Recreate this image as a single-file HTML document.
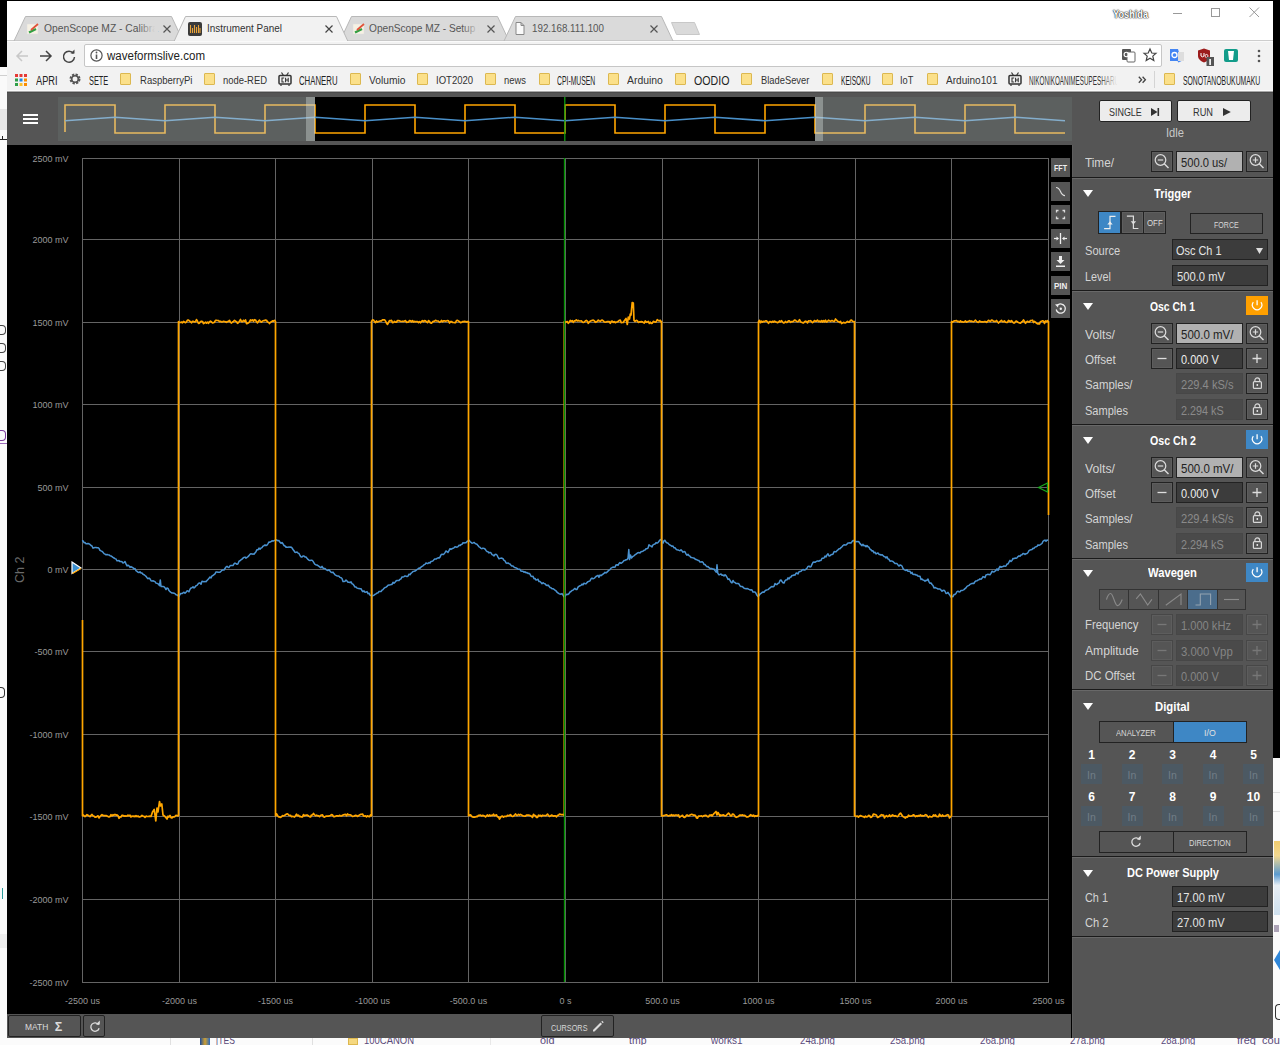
<!DOCTYPE html>
<html><head><meta charset="utf-8"><title>Instrument Panel</title>
<style>
*{box-sizing:border-box;margin:0;padding:0}
html,body{width:1280px;height:1045px;overflow:hidden;background:#000;font-family:"Liberation Sans",sans-serif;position:relative}
.a{position:absolute}
.t{position:absolute;white-space:nowrap;line-height:normal}
.fold{position:absolute;top:73px;width:11px;height:12px;background:#fbe08a;border:1px solid #dcb850;border-radius:1px}
.sb{position:absolute;left:1051px;width:19px;height:19px;background:#555;}
.tri{position:absolute;left:1083px;width:0;height:0;border-left:5px solid transparent;border-right:5px solid transparent;border-top:7px solid #fff}
.sep{position:absolute;left:1072px;width:201px;height:2px;border-top:1px solid #1a1a1a;background:#686868}
.btn{position:absolute;width:22px;height:21px;background:#555;border:1px solid #222;box-shadow:inset 0 0 0 1px #5d5d5d}
.inp{position:absolute;left:1176px;width:67px;height:21px;border:1px solid #222}
.lt{background:#b1b1b1}
.dk{background:#3c3c3c}
.dis{background:#4a4a4a;border-color:#474747}
.inpw{position:absolute;left:1172px;width:96px;height:21px;border:1px solid #222;background:#3c3c3c}
.pwr{position:absolute;left:1246px;width:22px;height:19px}
.inb{position:absolute;width:21px;height:20px;background:#4c5963}
svg{position:absolute;overflow:visible}
</style></head><body>
<div class="a" style="left:0;top:67px;width:7px;height:978px;background:#fafafa"></div>
<div class="a" style="left:0;top:75px;width:7px;height:1px;background:#d0d0d0"></div>
<div class="a" style="left:0;top:109px;width:7px;height:21px;background:#e6e6e6"></div>
<div class="a" style="left:0;top:139px;width:7px;height:1px;background:#222"></div>
<div class="a" style="left:2px;top:136px;width:1px;height:3px;background:#222"></div>
<div class="a" style="left:0;top:325px;width:6px;height:10px;border:1.2px solid #444;border-left:none;border-radius:0 4px 4px 0"></div>
<div class="a" style="left:0;top:343px;width:6px;height:10px;border:1.2px solid #444;border-left:none;border-radius:0 4px 4px 0"></div>
<div class="a" style="left:0;top:361px;width:6px;height:10px;border:1.2px solid #444;border-left:none;border-radius:0 4px 4px 0"></div>
<div class="a" style="left:0;top:430px;width:6px;height:11px;border:1.3px solid #7a3a9a;border-left:none;border-radius:0 4px 4px 0"></div>
<div class="a" style="left:0;top:443px;width:7px;height:1px;background:#9a6ab8"></div>
<div class="a" style="left:0;top:687px;width:5px;height:11px;border:1.3px solid #333;border-left:none;border-radius:0 4px 4px 0"></div>
<div class="a" style="left:2px;top:888px;width:1.3px;height:11px;background:#2a9a9a"></div>
<div class="a" style="left:0;top:934px;width:7px;height:14px;background:#eee"></div>
<div class="a" style="left:1273px;top:758px;width:7px;height:287px;background:#fafafa"></div>
<div class="a" style="left:1273px;top:792px;width:7px;height:1px;background:#ddd"></div>
<div class="a" style="left:1273px;top:811px;width:7px;height:1px;background:#ddd"></div>
<div class="a" style="left:1274px;top:841px;width:6px;height:74px;background:linear-gradient(#f0cc70 0,#f2d890 20%,#5a9ad0 45%,#e8eef4 60%,#cfe0ee 100%)"></div>
<div class="a" style="left:1274px;top:925px;width:5px;height:7px;background:#7a6a8a;opacity:.6"></div>
<div class="a" style="left:1274px;top:950px;width:6px;height:20px;background:#2f86d8;clip-path:polygon(100% 0,0 50%,100% 100%)"></div>
<div class="a" style="left:1275px;top:1004px;width:5px;height:16px;border:1.5px solid #333;border-right:none;border-radius:4px 0 0 4px"></div>
<div class="a" style="left:0;top:1038px;width:1280px;height:7px;background:#fbfbfb;overflow:hidden">
<div class="a" style="left:170px;top:0;width:1px;height:7px;background:#e0e0e0"></div><div class="a" style="left:312px;top:0;width:1px;height:7px;background:#e0e0e0"></div><div class="a" style="left:490px;top:0;width:1px;height:7px;background:#e8e8e8"></div>
<div class="a" style="left:200px;top:-2px;width:10px;height:9px;background:linear-gradient(90deg,#1a4a9a,#d0a030,#2a6ac0)"></div>
<div class="a" style="left:348px;top:0;width:10px;height:7px;background:#f5d880;border:1px solid #ddb850"></div>
<div class="t" style="left:216.00px;top:-4.13px;font-size:11px;color:#5a4a7a;transform:scaleX(0.7771);transform-origin:0 0;">[TES</div>
<div class="t" style="left:364.00px;top:-4.13px;font-size:11px;color:#5a4a7a;transform:scaleX(0.8609);transform-origin:0 0;">100CANON</div>
<div class="t" style="left:540.00px;top:-4.13px;font-size:11px;color:#5a4a7a;transform:scaleX(0.9878);transform-origin:0 0;">old</div>
<div class="t" style="left:629.00px;top:-4.13px;font-size:11px;color:#5a4a7a;transform:scaleX(0.9544);transform-origin:0 0;">tmp</div>
<div class="t" style="left:711.00px;top:-4.13px;font-size:11px;color:#5a4a7a;transform:scaleX(0.9041);transform-origin:0 0;">works1</div>
<div class="t" style="left:800.00px;top:-4.13px;font-size:11px;color:#5a4a7a;transform:scaleX(0.8802);transform-origin:0 0;">24a.png</div>
<div class="t" style="left:890.00px;top:-4.13px;font-size:11px;color:#5a4a7a;transform:scaleX(0.8802);transform-origin:0 0;">25a.png</div>
<div class="t" style="left:980.00px;top:-4.13px;font-size:11px;color:#5a4a7a;transform:scaleX(0.8802);transform-origin:0 0;">26a.png</div>
<div class="t" style="left:1070.00px;top:-4.13px;font-size:11px;color:#5a4a7a;transform:scaleX(0.8802);transform-origin:0 0;">27a.png</div>
<div class="t" style="left:1160.60px;top:-4.13px;font-size:11px;color:#5a4a7a;transform:scaleX(0.8651);transform-origin:0 0;">28a.png</div>
<div class="t" style="left:1237.00px;top:-4.13px;font-size:11px;color:#5a4a7a;">freq_count</div>
</div>
<div class="a" style="left:7px;top:1px;width:1266px;height:39px;background:#fff"></div>
<svg width="1280" height="45" style="left:0;top:0">
  <g stroke="#b8b8b8" stroke-width="1">
    <path d="M7 40.5 H1273" stroke="#cdcdcd"/>
    <path d="M14 41 L25.5 16.5 H171.5 L183 41 Z" fill="#dadada"/>
    <path d="M340 41 L351.5 16.5 H497.5 L509 41 Z" fill="#dadada"/>
    <path d="M504 41 L515.5 16.5 H661.5 L673 41 Z" fill="#dadada"/>
    <path d="M671.5 22.5 H694.5 L699.5 34.5 H676.5 Z" fill="#dadada" stroke="#c8c8c8"/>
    <path d="M174 41.5 L185.5 16.5 H336.5 L348 41.5" fill="#f2f2f2"/>
  </g>
</svg>
<svg width="14" height="14" style="left:26px;top:22px"><rect x="1" y="2" width="11" height="10" fill="#f6f1e4" stroke="#ddd" stroke-width=".5"/><path d="M3 10.5 L10 7" stroke="#2fa043" stroke-width="2.3"/><path d="M5 8 L12 2" stroke="#e0523a" stroke-width="1.8"/></svg>
<div class="t" style="left:44.00px;top:22.41px;font-size:11.5px;color:#555;transform:scaleX(0.8963);transform-origin:0 0;">OpenScope MZ - Calibra</div>
<div class="a" style="left:138px;top:20px;width:20px;height:15px;background:linear-gradient(90deg,rgba(218,218,218,0),#dadada 85%)"></div>
<svg width="8" height="8" style="left:163px;top:25px"><path d="M.5 .5 L7.5 7.5 M7.5 .5 L.5 7.5" stroke="#555" stroke-width="1.2"/></svg>
<svg width="14" height="14" style="left:188px;top:22px"><rect x="0" y="0" width="14" height="14" rx="2" fill="#3a3a3a"/><path d="M2.5 3 V11 M4.5 6 V11 M6.5 3 V11 M8.5 5 V11 M10.5 3 V11 M12 6 V11" stroke="#e8a23a" stroke-width="1.1"/></svg>
<div class="t" style="left:206.50px;top:22.41px;font-size:11.5px;color:#333;transform:scaleX(0.8627);transform-origin:0 0;">Instrument Panel</div>
<svg width="8" height="8" style="left:325px;top:25px"><path d="M.5 .5 L7.5 7.5 M7.5 .5 L.5 7.5" stroke="#444" stroke-width="1.2"/></svg>
<svg width="14" height="14" style="left:352px;top:22px"><rect x="1" y="2" width="11" height="10" fill="#f6f1e4" stroke="#ddd" stroke-width=".5"/><path d="M3 10.5 L10 7" stroke="#2fa043" stroke-width="2.3"/><path d="M5 8 L12 2" stroke="#e0523a" stroke-width="1.8"/></svg>
<div class="t" style="left:369.00px;top:22.41px;font-size:11.5px;color:#555;transform:scaleX(0.8805);transform-origin:0 0;">OpenScope MZ - Setup [</div>
<div class="a" style="left:462px;top:20px;width:20px;height:15px;background:linear-gradient(90deg,rgba(218,218,218,0),#dadada 85%)"></div>
<svg width="8" height="8" style="left:487px;top:25px"><path d="M.5 .5 L7.5 7.5 M7.5 .5 L.5 7.5" stroke="#555" stroke-width="1.2"/></svg>
<svg width="10" height="13" style="left:515px;top:22px"><path d="M1 .5 H6 L9 3.5 V12.5 H1 Z M6 .5 V3.5 H9" fill="#fafafa" stroke="#888" stroke-width="1"/></svg>
<div class="t" style="left:532.00px;top:22.41px;font-size:11.5px;color:#555;transform:scaleX(0.8508);transform-origin:0 0;">192.168.111.100</div>
<svg width="8" height="8" style="left:650px;top:25px"><path d="M.5 .5 L7.5 7.5 M7.5 .5 L.5 7.5" stroke="#555" stroke-width="1.2"/></svg>
<div class="t" style="left:1113.00px;top:8.37px;font-size:11px;color:#fff;font-weight:bold;transform:scaleX(0.8339);transform-origin:0 0;text-shadow:0 0 1px #222,0 0 1px #222,0 0 2px #444;">Yoshida</div>
<div class="a" style="left:1173px;top:13px;width:9px;height:1px;background:#999"></div>
<div class="a" style="left:1211px;top:8px;width:9px;height:9px;border:1px solid #999"></div>
<svg width="11" height="11" style="left:1249px;top:7px"><path d="M.5 .5 L10 10 M10 .5 L.5 10" stroke="#999" stroke-width="1"/></svg>
<div class="a" style="left:7px;top:41px;width:1266px;height:50px;background:#f2f2f2;border-top:1px solid #fafafa"></div>
<svg width="14" height="14" style="left:15px;top:49px"><path d="M13 7 H2 M7 2 L2 7 L7 12" fill="none" stroke="#c8c8c8" stroke-width="1.5"/></svg>
<svg width="14" height="14" style="left:39px;top:49px"><path d="M1 7 H12 M7 2 L12 7 L7 12" fill="none" stroke="#444" stroke-width="1.5"/></svg>
<svg width="14" height="14" style="left:62px;top:49px"><path d="M11.5 4.5 A5.5 5.5 0 1 0 12.5 8" fill="none" stroke="#444" stroke-width="1.5"/><path d="M8.5 4.5 H12.5 V0.5 Z" fill="#444"/></svg>
<div class="a" style="left:84px;top:44px;width:1078px;height:23px;background:#fff;border:1px solid #c6c6c6;border-radius:2px"></div>
<svg width="14" height="14" style="left:90px;top:49px"><circle cx="6.5" cy="6.5" r="5.6" fill="none" stroke="#555" stroke-width="1.2"/><path d="M6.5 5.5 V10" stroke="#555" stroke-width="1.6"/><circle cx="6.5" cy="3.5" r=".9" fill="#555"/></svg>
<div class="t" style="left:107.00px;top:49.49px;font-size:12.5px;color:#222;transform:scaleX(0.9221);transform-origin:0 0;">waveformslive.com</div>
<svg width="14" height="14" style="left:1122px;top:49px"><rect x="0" y="0" width="9" height="11" rx="1" fill="#555"/><rect x="5" y="3" width="8" height="10" rx="1" fill="#fff" stroke="#666"/><circle cx="4.3" cy="5.5" r="2.2" fill="none" stroke="#fff" stroke-width="1.1"/></svg>
<svg width="14" height="14" style="left:1143px;top:48px"><path d="M7 1 L8.8 5 L13 5.3 L9.8 8.1 L10.8 12.5 L7 10.2 L3.2 12.5 L4.2 8.1 L1 5.3 L5.2 5 Z" fill="none" stroke="#444" stroke-width="1.2"/></svg>
<svg width="16" height="16" style="left:1170px;top:49px"><path d="M0 0 H8 L11.5 12 L8.5 13.5 L7.5 12 H0 Z" fill="#4385f3"/><rect x="8" y="3" width="6" height="9" fill="#ddd"/><circle cx="4.5" cy="6" r="2.5" fill="none" stroke="#fff" stroke-width="1.3"/></svg>
<svg width="16" height="18" style="left:1198px;top:49px"><path d="M0 1.5 L6 -.5 L12 1.5 V7 C12 10 9 12.5 6 13.5 C3 12.5 0 10 0 7 Z" fill="#9c1c1c"/><path d="M3 4 V7 A2 2 0 0 0 6 7 V4 M7 7 A1.5 1.5 0 1 0 7 6.9" fill="none" stroke="#fff" stroke-width="1"/><rect x="8.5" y="8" width="7.5" height="9" fill="#555"/><rect x="11.3" y="10" width="1.6" height="6" fill="#fff"/></svg>
<svg width="14" height="14" style="left:1224px;top:49px"><rect x="0" y="0" width="14" height="13" rx="2" fill="#129c8a"/><path d="M4 2 H10 L9 11 H5 Z" fill="#fff"/></svg>
<svg width="4" height="14" style="left:1257px;top:49px"><circle cx="2" cy="2" r="1.3" fill="#555"/><circle cx="2" cy="7" r="1.3" fill="#555"/><circle cx="2" cy="12" r="1.3" fill="#555"/></svg>
<svg width="12" height="12" style="left:15px;top:74px"><g><rect x="0" y="0" width="3" height="3" fill="#e53935"/><rect x="4.5" y="0" width="3" height="3" fill="#e53935"/><rect x="9" y="0" width="3" height="3" fill="#e53935"/><rect x="0" y="4.5" width="3" height="3" fill="#2e9e48"/><rect x="4.5" y="4.5" width="3" height="3" fill="#1e88e5"/><rect x="9" y="4.5" width="3" height="3" fill="#fb8c00"/><rect x="0" y="9" width="3" height="3" fill="#2e9e48"/><rect x="4.5" y="9" width="3" height="3" fill="#fbc02d"/><rect x="9" y="9" width="3" height="3" fill="#fb8c00"/></g></svg>
<div class="t" style="left:35.60px;top:73.65px;font-size:12px;color:#222;transform:scaleX(0.7712);transform-origin:0 0;">APRI</div>
<svg width="12" height="12" style="left:69px;top:73px"><circle cx="6" cy="6" r="4.2" fill="none" stroke="#555" stroke-width="2.6" stroke-dasharray="2.1 1.2"/><circle cx="6" cy="6" r="3.3" fill="none" stroke="#555" stroke-width="1.6"/></svg>
<div class="t" style="left:89.00px;top:73.65px;font-size:12px;color:#222;transform:scaleX(0.6158);transform-origin:0 0;">SETE</div>
<div class="fold" style="left:120px"></div>
<div class="t" style="left:139.50px;top:74.07px;font-size:11px;color:#333;transform:scaleX(0.8658);transform-origin:0 0;">RaspberryPi</div>
<div class="fold" style="left:204px"></div>
<div class="t" style="left:223.20px;top:74.07px;font-size:11px;color:#333;transform:scaleX(0.8567);transform-origin:0 0;">node-RED</div>
<div class="fold" style="left:350px"></div>
<div class="t" style="left:368.50px;top:74.07px;font-size:11px;color:#333;transform:scaleX(0.9327);transform-origin:0 0;">Volumio</div>
<div class="fold" style="left:417px"></div>
<div class="t" style="left:435.50px;top:74.07px;font-size:11px;color:#333;transform:scaleX(0.8668);transform-origin:0 0;">IOT2020</div>
<div class="fold" style="left:485px"></div>
<div class="t" style="left:504.30px;top:74.07px;font-size:11px;color:#333;transform:scaleX(0.8528);transform-origin:0 0;">news</div>
<div class="fold" style="left:539px"></div>
<div class="t" style="left:557.00px;top:73.65px;font-size:12px;color:#222;transform:scaleX(0.5688);transform-origin:0 0;">CPI-MUSEN</div>
<div class="fold" style="left:608px"></div>
<div class="t" style="left:626.80px;top:74.07px;font-size:11px;color:#333;transform:scaleX(0.9469);transform-origin:0 0;">Arduino</div>
<div class="fold" style="left:675px"></div>
<div class="t" style="left:693.60px;top:73.65px;font-size:12px;color:#222;transform:scaleX(0.8850);transform-origin:0 0;">OODIO</div>
<div class="fold" style="left:741px"></div>
<div class="t" style="left:760.60px;top:74.07px;font-size:11px;color:#333;transform:scaleX(0.8493);transform-origin:0 0;">BladeSever</div>
<div class="fold" style="left:822px"></div>
<div class="t" style="left:840.60px;top:73.65px;font-size:12px;color:#222;transform:scaleX(0.5511);transform-origin:0 0;">KEISOKU</div>
<div class="fold" style="left:882px"></div>
<div class="t" style="left:900.40px;top:74.07px;font-size:11px;color:#333;transform:scaleX(0.8431);transform-origin:0 0;">IoT</div>
<div class="fold" style="left:927px"></div>
<div class="t" style="left:945.50px;top:74.07px;font-size:11px;color:#333;transform:scaleX(0.9153);transform-origin:0 0;">Arduino101</div>
<svg width="14" height="14" style="left:278px;top:72px"><rect x="1" y="3.5" width="12" height="8.5" rx="1" fill="none" stroke="#333" stroke-width="1.5"/><path d="M3.5 0.5 L5.5 3.5 M10.5 0.5 L8.5 3.5 M3 12.5 V14 M11 12.5 V14" stroke="#333" stroke-width="1.2"/><path d="M6.2 6 H4 V10 H6.2 M7.6 5.8 V10.2 M10.2 5.8 V10.2 M7.6 8 H10.2" fill="none" stroke="#333" stroke-width="1.1"/></svg>
<div class="t" style="left:298.50px;top:73.65px;font-size:12px;color:#222;transform:scaleX(0.6488);transform-origin:0 0;">CHANERU</div>
<svg width="14" height="14" style="left:1008px;top:72px"><rect x="1" y="3.5" width="12" height="8.5" rx="1" fill="none" stroke="#333" stroke-width="1.5"/><path d="M3.5 0.5 L5.5 3.5 M10.5 0.5 L8.5 3.5 M3 12.5 V14 M11 12.5 V14" stroke="#333" stroke-width="1.2"/><path d="M6.2 6 H4 V10 H6.2 M7.6 5.8 V10.2 M10.2 5.8 V10.2 M7.6 8 H10.2" fill="none" stroke="#333" stroke-width="1.1"/></svg>
<div class="t" style="left:1028.60px;top:73.65px;font-size:12px;color:#333;transform:scaleX(0.5252);transform-origin:0 0;">NIKONIKOANIMESUPESHARU</div>
<div class="a" style="left:1100px;top:72px;width:22px;height:15px;background:linear-gradient(90deg,rgba(242,242,242,0),#f2f2f2 80%)"></div>
<svg width="9" height="8" style="left:1137.5px;top:75.5px"><path d="M.8 .8 L3.6 3.8 L.8 6.8 M4.6 .8 L7.4 3.8 L4.6 6.8" fill="none" stroke="#444" stroke-width="1.3"/></svg>
<div class="a" style="left:1154px;top:71px;width:1px;height:17px;background:#d4d4d4"></div>
<div class="fold" style="left:1164px"></div>
<div class="t" style="left:1183.30px;top:73.65px;font-size:12px;color:#222;transform:scaleX(0.5693);transform-origin:0 0;">SONOTANOBUKUMAKU</div>
<div class="a" style="left:7px;top:90px;width:1266px;height:1px;background:#fafafa"></div>
<div class="a" style="left:7px;top:91px;width:1266px;height:1px;background:#a8a8a8"></div>
<div class="a" style="left:7px;top:92px;width:1266px;height:1px;background:#4a4a4a"></div>
<div class="a" style="left:7px;top:93px;width:1266px;height:945px;background:#555"></div>
<div class="a" style="left:23px;top:114px;width:15px;height:2px;background:#fff"></div>
<div class="a" style="left:23px;top:118px;width:15px;height:2px;background:#fff"></div>
<div class="a" style="left:23px;top:122px;width:15px;height:2px;background:#fff"></div>
<div class="a" style="left:58px;top:97px;width:1014px;height:44px;background:#000"></div>
<svg width="1280" height="160" style="left:0;top:0">
  <path d="M65 132 L65 105 L115 105 L115 133 L165 133 L165 105 L215 105 L215 133 L265 133 L265 105 L315 105 L315 133 L365 133 L365 105 L415 105 L415 133 L465 133 L465 105 L515 105 L515 133 L565 133 L565 105 L615 105 L615 133 L665 133 L665 105 L715 105 L715 133 L765 133 L765 105 L815 105 L815 133 L865 133 L865 105 L915 105 L915 133 L965 133 L965 105 L1015 105 L1015 133 L1065 133" fill="none" stroke="#ffa500" stroke-width="1.6"/>
  <path d="M65 120.7 L115 117.2 L165 120.7 L215 117.2 L265 120.7 L315 117.2 L365 120.7 L415 117.2 L465 120.7 L515 117.2 L565 120.7 L615 117.2 L665 120.7 L715 117.2 L765 120.7 L815 117.2 L865 120.7 L915 117.2 L965 120.7 L1015 117.2 L1065 120.7" fill="none" stroke="#4a90c9" stroke-width="1.6"/>
  <line x1="564.8" y1="97" x2="564.8" y2="141" stroke="#109a10" stroke-width="1.3"/>
  <rect x="58" y="97" width="248" height="44" fill="rgba(200,209,206,0.46)"/>
  <rect x="823" y="97" width="249" height="44" fill="rgba(200,209,206,0.46)"/>
  <rect x="306" y="97" width="9" height="44" fill="rgba(205,214,211,0.68)"/>
  <rect x="815" y="97" width="8" height="44" fill="rgba(205,214,211,0.68)"/>
</svg>
<div class="a" style="left:7px;top:145px;width:1065px;height:869px;background:#000"></div>
<svg width="1280" height="1045" style="left:0;top:0">
  <g stroke="#646464" stroke-width="1"><line x1="82.5" y1="158" x2="82.5" y2="983" /><line x1="179.5" y1="158" x2="179.5" y2="983" /><line x1="275.5" y1="158" x2="275.5" y2="983" /><line x1="372.5" y1="158" x2="372.5" y2="983" /><line x1="468.5" y1="158" x2="468.5" y2="983" /><line x1="565.5" y1="158" x2="565.5" y2="983" /><line x1="662.5" y1="158" x2="662.5" y2="983" /><line x1="758.5" y1="158" x2="758.5" y2="983" /><line x1="855.5" y1="158" x2="855.5" y2="983" /><line x1="951.5" y1="158" x2="951.5" y2="983" /><line x1="1048.5" y1="158" x2="1048.5" y2="983" /><line x1="82" y1="158.5" x2="1049" y2="158.5" /><line x1="82" y1="239.5" x2="1049" y2="239.5" /><line x1="82" y1="322.5" x2="1049" y2="322.5" /><line x1="82" y1="404.5" x2="1049" y2="404.5" /><line x1="82" y1="487.5" x2="1049" y2="487.5" /><line x1="82" y1="569.5" x2="1049" y2="569.5" /><line x1="82" y1="651.5" x2="1049" y2="651.5" /><line x1="82" y1="734.5" x2="1049" y2="734.5" /><line x1="82" y1="816.5" x2="1049" y2="816.5" /><line x1="82" y1="899.5" x2="1049" y2="899.5" /><line x1="82" y1="982.5" x2="1049" y2="982.5" /></g>
  <path d="M82.0 541.0 L83.0 540.7 L84.0 542.8 L85.0 542.6 L86.0 543.7 L87.0 543.8 L88.0 543.5 L89.0 543.8 L90.0 544.4 L91.0 545.5 L92.0 546.0 L93.0 548.2 L94.0 547.7 L95.0 547.5 L96.0 547.5 L97.0 547.8 L98.0 547.7 L99.0 548.3 L100.0 550.3 L101.0 550.9 L102.0 551.4 L103.0 552.3 L104.0 553.6 L105.0 554.1 L106.0 554.8 L107.0 554.5 L108.0 554.8 L109.0 554.9 L110.0 555.7 L111.0 555.9 L112.0 556.6 L113.0 557.4 L114.0 558.0 L115.0 558.6 L116.0 559.0 L117.0 560.8 L118.0 560.8 L119.0 560.6 L120.0 561.6 L121.0 561.5 L122.0 561.7 L123.0 563.0 L124.0 562.6 L125.0 561.5 L126.0 563.9 L127.0 566.0 L128.0 565.2 L129.0 565.8 L130.0 567.4 L131.0 566.6 L132.0 567.3 L133.0 567.7 L134.0 568.9 L135.0 568.5 L136.0 570.7 L137.0 571.4 L138.0 572.3 L139.0 572.6 L140.0 571.7 L141.0 573.0 L142.0 573.0 L143.0 574.3 L144.0 574.7 L145.0 575.5 L146.0 576.3 L147.0 577.7 L148.0 578.7 L149.0 578.1 L150.0 578.9 L151.0 580.7 L152.0 581.1 L153.0 580.7 L154.0 581.3 L155.0 581.6 L156.0 583.1 L157.0 583.4 L158.0 583.7 L159.5 585.6 L160.3 579.9 L161.0 586.4 L163.0 586.6 L164.0 586.8 L165.0 587.8 L166.0 589.5 L167.0 588.0 L168.0 588.4 L169.0 590.6 L170.0 591.7 L171.0 592.4 L172.0 593.0 L173.0 593.0 L174.0 593.2 L175.0 593.7 L176.0 594.8 L177.0 594.9 L178.0 595.6 L179.0 596.5 L180.0 594.4 L181.0 593.4 L182.0 593.6 L183.0 592.8 L184.0 592.2 L185.0 593.3 L186.0 592.3 L187.0 590.8 L188.0 591.0 L189.0 591.8 L190.0 589.3 L191.0 588.0 L192.0 587.7 L193.0 586.7 L194.0 588.0 L195.0 587.1 L196.0 585.7 L197.0 585.4 L198.0 584.0 L199.0 583.1 L200.0 583.0 L201.0 584.3 L202.0 581.2 L203.0 581.4 L204.0 581.9 L205.0 581.4 L206.0 581.7 L207.0 580.5 L208.0 579.4 L209.0 578.3 L210.0 577.0 L211.0 577.9 L212.0 575.9 L213.0 575.5 L214.0 574.6 L215.0 573.8 L216.0 571.9 L217.0 572.1 L218.0 572.3 L219.0 572.2 L220.0 572.3 L221.0 571.3 L222.0 570.2 L223.0 570.1 L224.0 570.0 L225.0 568.5 L226.0 567.0 L227.0 566.3 L228.0 567.2 L229.0 567.4 L230.0 565.8 L231.0 565.4 L232.0 565.5 L233.0 565.6 L234.0 563.9 L235.0 563.1 L236.0 563.6 L237.0 564.3 L238.0 563.8 L239.0 561.2 L240.0 560.8 L241.0 559.8 L242.0 559.1 L243.0 558.1 L244.0 557.4 L245.0 557.1 L246.0 558.1 L247.0 557.4 L248.0 556.6 L249.0 555.6 L250.0 554.3 L251.0 553.7 L252.0 554.2 L253.0 553.9 L254.0 554.3 L255.0 552.9 L256.0 551.7 L257.0 549.7 L258.0 549.8 L259.0 548.1 L260.0 549.3 L261.0 548.1 L262.0 547.6 L263.0 546.1 L264.0 545.7 L265.0 544.9 L266.0 545.7 L267.0 545.2 L268.0 543.6 L269.0 541.9 L270.0 542.2 L271.0 541.7 L272.0 540.7 L273.0 541.2 L274.0 540.6 L275.0 540.3 L276.0 539.8 L277.0 540.2 L278.0 540.8 L279.0 540.5 L280.0 542.3 L281.0 543.3 L282.0 542.5 L283.0 543.8 L284.0 545.5 L285.0 546.0 L286.0 547.3 L287.0 547.1 L288.0 547.4 L289.0 546.9 L290.0 547.3 L291.0 547.0 L292.0 547.9 L293.0 549.5 L294.0 550.8 L295.0 552.2 L296.0 552.4 L297.0 552.0 L298.0 553.1 L299.0 553.5 L300.0 555.5 L301.0 556.9 L302.0 557.1 L303.0 555.9 L304.0 556.1 L305.0 557.0 L306.0 557.1 L307.0 558.3 L308.0 559.4 L309.0 560.3 L310.0 560.6 L311.0 560.2 L312.0 560.3 L313.0 561.2 L314.0 563.0 L315.0 564.4 L316.0 564.9 L317.0 565.0 L318.0 565.6 L319.0 566.3 L320.0 567.3 L321.0 567.7 L322.0 566.4 L323.0 568.0 L324.0 568.6 L325.0 568.5 L326.0 569.6 L327.0 570.2 L328.0 570.5 L329.0 569.7 L330.0 571.0 L331.0 572.2 L332.0 572.7 L333.0 572.1 L334.0 573.6 L335.0 574.8 L336.0 575.3 L337.0 576.0 L338.0 576.1 L339.0 576.2 L340.0 577.4 L341.0 577.7 L342.0 578.5 L343.0 581.5 L344.0 581.4 L345.0 581.2 L346.0 580.0 L347.0 581.0 L348.0 582.3 L349.0 582.2 L350.0 582.7 L351.0 581.8 L352.0 583.7 L353.0 584.1 L354.0 585.5 L355.0 587.1 L356.0 587.0 L357.0 588.1 L358.0 588.4 L359.0 588.5 L360.0 588.7 L361.0 588.7 L362.0 590.6 L363.0 591.6 L364.0 590.9 L365.0 592.2 L366.0 592.0 L367.0 591.6 L368.0 593.7 L369.0 593.2 L370.0 595.1 L371.0 595.6 L372.0 596.1 L373.0 595.5 L374.0 595.3 L375.0 594.4 L376.0 593.8 L377.0 593.0 L378.0 592.9 L379.0 591.5 L380.0 591.5 L381.0 591.6 L382.0 590.2 L383.0 589.6 L384.0 588.3 L385.0 587.5 L386.0 587.3 L387.0 586.4 L388.0 585.3 L389.0 585.1 L390.0 584.9 L391.0 584.6 L392.0 584.4 L393.0 582.2 L394.0 583.2 L395.0 582.2 L396.0 581.0 L397.0 580.4 L398.0 580.4 L399.0 580.5 L400.0 579.3 L401.0 578.8 L402.0 576.9 L403.0 577.0 L404.0 576.6 L405.0 575.9 L406.0 576.2 L407.0 576.7 L408.0 576.2 L409.0 574.2 L410.0 574.7 L411.0 573.3 L412.0 572.5 L413.0 571.4 L414.0 571.3 L415.0 571.1 L416.0 570.4 L417.0 569.5 L418.0 568.8 L419.0 568.0 L420.0 568.3 L421.0 567.1 L422.0 566.4 L423.0 565.8 L424.0 564.8 L425.0 564.4 L426.0 563.0 L427.0 563.4 L428.0 563.4 L429.0 562.5 L430.0 563.1 L431.0 561.4 L432.0 561.3 L433.0 560.9 L434.0 559.6 L435.0 558.9 L436.0 559.1 L437.0 558.3 L438.0 557.8 L439.0 558.1 L440.0 557.1 L441.0 554.9 L442.0 554.2 L443.0 554.7 L444.0 554.0 L445.0 552.6 L446.0 551.0 L447.0 551.6 L448.0 552.5 L449.0 550.6 L450.0 548.7 L451.0 549.4 L452.0 548.7 L453.0 548.3 L454.0 547.8 L455.0 546.8 L456.0 547.0 L457.0 547.2 L458.0 546.6 L459.0 545.3 L460.0 545.6 L461.0 544.6 L462.0 544.3 L463.0 542.7 L464.0 542.9 L465.0 542.7 L466.0 542.7 L467.0 541.5 L468.0 541.0 L469.0 540.2 L470.0 541.5 L471.0 542.3 L472.0 543.3 L473.0 542.9 L474.0 542.4 L475.0 543.3 L476.0 544.0 L477.0 544.2 L478.0 545.6 L479.0 546.8 L480.0 547.3 L481.0 548.4 L482.0 548.7 L483.0 548.1 L484.0 548.4 L485.0 549.0 L486.0 550.4 L487.0 551.5 L488.0 551.8 L489.0 552.9 L490.0 552.3 L491.0 552.9 L492.0 554.6 L493.0 555.0 L494.0 555.9 L495.0 554.5 L496.0 554.3 L497.0 555.0 L498.0 557.1 L499.0 558.8 L500.0 558.4 L501.0 558.1 L502.0 558.3 L503.0 558.7 L504.0 560.3 L505.0 560.8 L506.0 562.9 L507.0 563.4 L508.0 562.9 L509.0 563.6 L510.0 564.0 L511.0 565.2 L512.0 566.1 L513.0 566.0 L514.0 567.1 L515.0 567.7 L516.0 567.8 L517.0 568.4 L518.0 569.3 L519.0 569.3 L520.0 569.3 L521.0 571.1 L522.0 571.3 L523.0 571.3 L524.0 572.3 L525.0 571.7 L526.0 572.8 L527.0 572.6 L528.0 573.5 L529.0 573.2 L530.0 574.1 L531.0 576.1 L532.0 576.6 L533.0 576.3 L534.0 578.7 L535.0 578.4 L536.0 580.1 L537.0 579.8 L538.0 579.2 L539.0 581.6 L540.0 581.5 L541.0 582.5 L542.0 583.7 L543.0 582.7 L544.0 583.5 L545.0 583.7 L546.0 585.0 L547.0 585.5 L548.0 585.1 L549.0 586.1 L550.0 587.5 L551.0 587.7 L552.0 588.7 L553.0 588.7 L554.0 589.3 L555.0 590.2 L556.0 590.8 L557.0 592.2 L558.0 593.0 L559.0 593.6 L560.0 594.1 L561.0 594.2 L562.0 593.6 L563.0 595.2 L564.0 596.8 L565.0 596.2 L566.0 594.9 L567.0 594.2 L568.0 594.5 L569.0 593.6 L570.0 592.0 L571.0 591.5 L572.0 590.5 L573.0 590.1 L574.0 589.2 L575.0 588.4 L576.0 589.5 L577.0 589.4 L578.0 587.1 L579.0 586.2 L580.0 585.8 L581.0 585.4 L582.0 584.1 L583.0 584.9 L584.0 583.2 L585.0 583.7 L586.0 583.7 L587.0 582.6 L588.0 581.6 L589.0 581.3 L590.0 580.9 L591.0 578.8 L592.0 578.1 L593.0 578.8 L594.0 578.3 L595.0 577.6 L596.0 576.5 L597.0 575.9 L598.0 575.3 L599.0 577.3 L600.0 575.0 L601.0 575.7 L602.0 574.9 L603.0 574.1 L604.0 573.4 L605.0 572.3 L606.0 572.9 L607.0 572.1 L608.0 571.1 L609.0 570.2 L610.0 569.7 L611.0 568.2 L612.0 567.7 L613.0 567.0 L614.0 567.3 L615.0 567.1 L616.0 564.9 L617.0 564.7 L618.0 565.3 L619.0 563.6 L620.0 562.5 L621.0 563.3 L622.0 562.6 L623.0 561.7 L624.0 560.4 L625.0 560.5 L626.0 559.7 L627.0 559.7 L628.0 558.2 L628.8 549.6 L629.5 559.6 L630.5 555.0 L631.5 558.0 L633.0 556.3 L634.0 555.8 L635.0 554.8 L636.0 554.2 L637.0 553.4 L638.0 552.7 L639.0 552.6 L640.0 553.0 L641.0 551.7 L642.0 551.6 L643.0 551.1 L644.0 550.3 L645.0 550.1 L646.0 548.8 L647.0 548.7 L648.0 548.1 L649.0 544.8 L650.0 545.7 L651.0 546.0 L652.0 546.9 L653.0 544.8 L654.0 544.3 L655.0 544.0 L656.0 542.6 L657.0 543.2 L658.0 542.6 L659.0 541.2 L660.0 539.9 L661.0 539.5 L662.0 541.6 L663.0 543.1 L664.0 540.7 L665.0 540.3 L666.0 542.2 L667.0 542.9 L668.0 543.1 L669.0 544.4 L670.0 545.0 L671.0 545.7 L672.0 546.4 L673.0 546.0 L674.0 547.8 L675.0 547.7 L676.0 549.1 L677.0 549.8 L678.0 549.9 L679.0 550.4 L680.0 550.7 L681.0 549.9 L682.0 550.9 L683.0 552.2 L684.0 551.6 L685.0 551.7 L686.0 554.0 L687.0 555.2 L688.0 554.3 L689.0 555.7 L690.0 556.2 L691.0 557.6 L692.0 557.6 L693.0 557.9 L694.0 558.0 L695.0 559.0 L696.0 559.6 L697.0 559.8 L698.0 560.4 L699.0 560.6 L700.0 562.1 L701.0 561.9 L702.0 561.7 L703.0 562.3 L704.0 564.4 L705.0 564.6 L706.0 565.8 L707.0 566.7 L708.0 566.6 L709.0 567.7 L710.0 568.4 L711.0 568.6 L712.0 568.5 L713.0 569.2 L714.0 569.0 L715.0 570.6 L716.3 572.2 L717.0 564.8 L717.8 573.3 L719.0 574.9 L721.0 574.0 L722.0 575.2 L723.0 575.0 L724.0 576.0 L725.0 574.7 L726.0 575.6 L727.0 577.3 L728.0 579.4 L729.0 578.8 L730.0 580.4 L731.0 582.1 L732.0 582.9 L733.0 580.5 L734.0 582.1 L735.0 582.5 L736.0 583.6 L737.0 583.6 L738.0 583.5 L739.0 584.0 L740.0 585.9 L741.0 586.6 L742.0 586.4 L743.0 587.1 L744.0 588.1 L745.0 588.6 L746.0 588.7 L747.0 588.6 L748.0 588.8 L749.0 589.4 L750.0 589.9 L751.0 589.7 L752.0 590.0 L753.0 592.1 L754.0 592.0 L755.0 592.0 L756.0 593.3 L757.0 595.3 L758.0 596.5 L759.0 595.6 L760.0 594.0 L761.0 593.4 L762.0 592.5 L763.0 592.0 L764.0 592.2 L765.0 590.9 L766.0 590.2 L767.0 589.9 L768.0 589.6 L769.0 588.7 L770.0 587.9 L771.0 587.0 L772.0 586.5 L773.0 586.9 L774.0 586.3 L775.0 583.5 L776.0 584.6 L777.0 584.4 L778.0 583.4 L779.0 583.0 L780.0 580.5 L781.0 580.0 L782.0 581.5 L783.0 582.7 L784.0 583.1 L785.0 580.8 L786.0 579.9 L787.0 579.8 L788.0 577.9 L789.0 578.9 L790.0 577.3 L791.0 577.0 L792.0 575.4 L793.0 575.5 L794.0 574.9 L795.0 575.2 L796.0 573.3 L797.0 573.0 L798.0 573.9 L799.0 571.8 L800.0 571.6 L801.0 571.3 L802.0 570.2 L803.0 569.5 L804.0 570.1 L805.0 569.9 L806.0 569.1 L807.0 568.2 L808.0 566.4 L809.0 566.1 L810.0 567.0 L811.0 566.6 L812.0 564.3 L813.0 562.3 L814.0 562.1 L815.0 562.3 L816.0 561.6 L817.0 561.1 L818.0 561.1 L819.0 561.2 L820.0 560.4 L821.0 560.5 L822.0 558.3 L823.0 558.3 L824.0 558.0 L825.0 556.1 L826.0 557.0 L827.0 554.9 L828.0 553.8 L829.0 556.0 L830.0 555.7 L831.0 554.7 L832.0 554.6 L833.0 554.1 L834.0 551.8 L835.0 551.6 L836.0 551.9 L837.0 550.6 L838.0 549.8 L839.0 548.8 L840.0 548.8 L841.0 547.6 L842.0 546.7 L843.0 545.5 L844.0 544.8 L845.0 545.0 L846.0 545.0 L847.0 544.1 L848.0 542.9 L849.0 543.0 L850.0 542.8 L851.0 543.1 L852.0 541.6 L853.0 540.6 L854.0 540.6 L855.0 541.6 L856.0 541.5 L857.0 541.7 L858.0 541.4 L859.0 542.0 L860.0 543.6 L861.0 544.6 L862.0 545.6 L863.0 544.3 L864.0 545.8 L865.0 545.5 L866.0 546.8 L867.0 545.5 L868.0 546.8 L869.0 547.2 L870.0 549.3 L871.0 549.7 L872.0 551.1 L873.0 550.8 L874.0 552.8 L875.0 552.2 L876.0 554.0 L877.0 553.3 L878.0 552.9 L879.0 554.4 L880.0 554.5 L881.0 555.1 L882.0 554.7 L883.0 555.5 L884.0 556.6 L885.0 556.8 L886.0 558.0 L887.0 556.8 L888.0 559.0 L889.0 559.3 L890.0 561.2 L891.0 561.1 L892.0 561.1 L893.0 561.5 L894.0 562.5 L895.0 563.6 L896.0 563.6 L897.0 563.6 L898.0 564.9 L899.0 566.1 L900.0 565.0 L901.0 565.3 L902.0 566.0 L903.0 568.5 L904.0 569.6 L905.0 570.1 L906.0 570.5 L907.0 569.7 L908.0 571.3 L909.0 571.2 L910.0 571.2 L911.0 573.5 L912.0 572.4 L913.0 574.3 L914.0 574.6 L915.0 574.2 L916.0 575.1 L917.0 575.1 L918.0 576.1 L919.0 576.3 L920.0 576.3 L921.0 579.5 L922.0 579.0 L923.0 580.1 L924.0 580.2 L925.0 581.1 L926.0 580.3 L927.0 580.4 L928.0 579.0 L929.0 581.9 L930.0 583.2 L931.0 582.9 L932.0 584.5 L933.0 585.5 L934.0 588.0 L935.0 587.5 L936.0 588.0 L937.0 588.4 L938.0 589.0 L939.0 588.9 L940.0 588.9 L941.0 590.0 L942.0 591.3 L943.0 590.4 L944.0 590.2 L945.0 591.3 L946.0 593.5 L947.0 593.3 L948.0 592.4 L949.0 594.1 L950.0 595.3 L951.0 597.0 L952.0 596.3 L953.0 596.7 L954.0 594.5 L955.0 594.4 L956.0 593.5 L957.0 591.7 L958.0 591.2 L959.0 591.9 L960.0 591.8 L961.0 590.4 L962.0 590.5 L963.0 590.1 L964.0 589.6 L965.0 588.6 L966.0 587.8 L967.0 586.3 L968.0 585.8 L969.0 585.4 L970.0 584.3 L971.0 583.8 L972.0 583.6 L973.0 583.2 L974.0 583.4 L975.0 581.6 L976.0 580.9 L977.0 580.8 L978.0 580.0 L979.0 579.8 L980.0 578.8 L981.0 579.3 L982.0 578.2 L983.0 576.6 L984.0 577.0 L985.0 577.6 L986.0 574.9 L987.0 574.6 L988.0 574.3 L989.0 574.6 L990.0 574.8 L991.0 573.4 L992.0 571.3 L993.0 571.7 L994.0 571.9 L995.0 571.2 L996.0 570.4 L997.0 568.9 L998.0 570.4 L999.0 568.1 L1000.0 566.4 L1001.0 567.2 L1002.0 566.8 L1003.0 566.5 L1004.0 565.9 L1005.0 566.3 L1006.0 566.0 L1007.0 564.1 L1008.0 564.0 L1009.0 562.1 L1010.0 560.4 L1011.0 561.5 L1012.0 560.5 L1013.0 558.4 L1014.0 558.7 L1015.0 558.0 L1016.0 558.3 L1017.0 557.8 L1018.0 556.6 L1019.0 555.8 L1020.0 556.3 L1021.0 554.9 L1022.0 554.7 L1023.0 553.5 L1024.0 553.7 L1025.0 554.5 L1026.0 553.7 L1027.0 553.5 L1028.0 552.5 L1029.0 550.7 L1030.0 550.0 L1031.0 549.7 L1032.0 549.5 L1033.0 548.3 L1034.0 548.4 L1035.0 547.1 L1036.0 546.8 L1037.0 546.3 L1038.0 544.8 L1039.0 545.5 L1040.0 544.8 L1041.0 544.2 L1042.0 543.5 L1043.0 541.3 L1044.0 540.5 L1045.0 540.1 L1046.0 541.1 L1047.0 540.1 L1048.0 540.2" fill="none" stroke="#4a92d0" stroke-width="1.5" stroke-linejoin="round"/>
  <path d="M82.5 620.0 L82.5 815.8 L83.0 814.8 L84.0 815.7 L85.0 816.5 L86.0 815.7 L87.0 814.7 L88.0 815.3 L89.0 815.9 L90.0 816.7 L91.0 815.3 L92.0 814.5 L93.0 815.8 L94.0 816.2 L95.0 817.2 L96.0 817.2 L97.0 816.4 L98.0 815.8 L99.0 817.9 L100.0 816.5 L101.0 815.5 L102.0 814.7 L103.0 815.4 L104.0 815.7 L105.0 815.5 L106.0 815.6 L107.0 815.9 L108.0 816.4 L109.0 817.0 L110.0 816.5 L111.0 814.7 L112.0 815.9 L113.0 814.7 L114.0 815.2 L115.0 814.3 L116.0 815.1 L117.0 814.9 L118.0 815.6 L119.0 818.3 L120.0 816.9 L121.0 817.0 L122.0 815.3 L123.0 815.3 L124.0 816.1 L125.0 815.9 L126.0 816.1 L127.0 816.0 L128.0 815.1 L129.0 815.9 L130.0 815.2 L131.0 817.0 L132.0 816.0 L133.0 816.4 L134.0 816.1 L135.0 816.7 L136.0 815.7 L137.0 816.6 L138.0 816.0 L139.0 816.9 L140.0 816.8 L141.0 816.4 L142.0 815.4 L143.0 816.2 L144.0 816.4 L145.0 817.4 L146.0 816.2 L147.0 816.4 L148.0 816.5 L149.0 816.3 L150.0 816.2 L151.0 816.5 L152.5 812.0 L154.2 809.5 L155.8 821.0 L157.0 808.0 L158.0 812.0 L159.5 801.5 L160.5 806.0 L161.8 804.0 L163.0 815.0 L165.0 816.5 L167.0 819.0 L168.0 816.2 L169.0 817.0 L170.0 815.4 L171.0 817.6 L172.0 818.0 L173.0 816.9 L174.0 816.9 L175.0 816.4 L176.0 815.4 L177.0 815.5 L178.0 816.0 L178.5 815.8 L178.5 321.5 L179.5 322.5 L180.5 322.5 L181.5 322.0 L182.5 322.8 L183.5 321.5 L184.5 322.1 L185.5 322.7 L186.5 321.8 L187.5 320.2 L188.5 320.2 L189.5 321.1 L190.5 321.7 L191.5 322.8 L192.5 321.3 L193.5 321.4 L194.5 322.0 L195.5 321.6 L196.5 319.6 L197.5 321.3 L198.5 323.3 L199.5 323.1 L200.5 321.5 L201.5 321.2 L202.5 321.5 L203.5 323.5 L204.5 322.9 L205.5 322.2 L206.5 323.1 L207.5 322.1 L208.5 323.3 L209.5 321.8 L210.5 321.2 L211.5 322.0 L212.5 322.8 L213.5 322.6 L214.5 322.2 L215.5 320.4 L216.5 320.4 L217.5 320.5 L218.5 320.6 L219.5 321.6 L220.5 321.3 L221.5 322.0 L222.5 321.8 L223.5 321.4 L224.5 321.5 L225.5 321.9 L226.5 322.3 L227.5 321.5 L228.5 321.3 L229.5 320.3 L230.5 322.3 L231.5 323.0 L232.5 322.0 L233.5 321.4 L234.5 320.4 L235.5 321.2 L236.5 321.5 L237.5 323.3 L238.5 322.5 L239.5 321.3 L240.5 319.5 L241.5 321.7 L242.5 321.7 L243.5 320.3 L244.5 321.1 L245.5 320.0 L246.5 323.6 L247.5 323.4 L248.5 322.8 L249.5 321.9 L250.5 320.0 L251.5 320.7 L252.5 319.9 L253.5 321.3 L254.5 319.7 L255.5 320.0 L256.5 321.8 L257.5 322.9 L258.5 321.2 L259.5 320.1 L260.5 321.6 L261.5 322.2 L262.5 321.0 L263.5 320.7 L264.5 320.6 L265.5 320.1 L266.5 320.3 L267.5 322.0 L268.5 322.3 L269.5 323.5 L270.5 322.3 L271.5 321.8 L272.5 320.8 L273.5 321.1 L274.5 320.3 L275.5 321.5 L275.5 815.8 L276.5 813.8 L277.5 815.5 L278.5 816.8 L279.5 816.9 L280.5 817.4 L281.5 816.7 L282.5 815.6 L283.5 815.8 L284.5 815.5 L285.5 814.8 L286.5 814.0 L287.5 813.8 L288.5 814.9 L289.5 815.5 L290.5 815.3 L291.5 816.7 L292.5 816.4 L293.5 816.5 L294.5 817.1 L295.5 815.7 L296.5 814.2 L297.5 815.7 L298.5 815.2 L299.5 816.6 L300.5 816.4 L301.5 816.9 L302.5 816.9 L303.5 814.6 L304.5 815.8 L305.5 815.3 L306.5 815.0 L307.5 815.1 L308.5 816.1 L309.5 816.6 L310.5 817.0 L311.5 815.0 L312.5 815.0 L313.5 813.5 L314.5 814.7 L315.5 815.8 L316.5 815.2 L317.5 815.7 L318.5 815.9 L319.5 816.7 L320.5 815.5 L321.5 815.0 L322.5 814.8 L323.5 816.8 L324.5 817.1 L325.5 816.3 L326.5 816.2 L327.5 816.1 L328.5 816.1 L329.5 815.8 L330.5 815.5 L331.5 814.7 L332.5 814.8 L333.5 816.7 L334.5 816.6 L335.5 816.2 L336.5 815.8 L337.5 815.9 L338.5 816.1 L339.5 815.4 L340.5 815.8 L341.5 816.0 L342.5 815.3 L343.5 814.9 L344.5 814.6 L345.5 814.4 L346.5 815.9 L347.5 814.0 L348.5 814.8 L349.5 814.8 L350.5 814.9 L351.5 815.5 L352.5 816.5 L353.5 816.2 L354.5 815.9 L355.5 815.3 L356.5 815.5 L357.5 816.4 L358.5 815.8 L359.5 814.9 L360.5 814.4 L361.5 814.3 L362.5 814.0 L363.5 815.9 L364.5 816.1 L365.5 815.8 L366.5 816.9 L367.5 815.8 L368.5 816.4 L369.5 816.7 L370.5 815.0 L371.5 815.8 L371.5 321.5 L372.5 319.9 L373.5 320.0 L374.5 321.6 L375.5 322.6 L376.5 321.0 L377.5 322.1 L378.5 321.5 L379.5 321.2 L380.5 320.9 L381.5 321.0 L382.5 319.8 L383.5 319.9 L384.5 319.8 L385.5 321.1 L386.5 323.0 L387.5 324.4 L388.5 322.5 L389.5 320.6 L390.5 320.8 L391.5 320.4 L392.5 322.6 L393.5 322.5 L394.5 321.3 L395.5 322.2 L396.5 322.2 L397.5 320.5 L398.5 320.6 L399.5 320.9 L400.5 321.3 L401.5 321.5 L402.5 321.2 L403.5 321.5 L404.5 321.0 L405.5 320.6 L406.5 322.3 L407.5 322.1 L408.5 322.1 L409.5 320.5 L410.5 320.9 L411.5 321.9 L412.5 320.6 L413.5 322.0 L414.5 321.4 L415.5 321.8 L416.5 321.5 L417.5 321.7 L418.5 322.5 L419.5 321.6 L420.5 322.8 L421.5 321.5 L422.5 320.7 L423.5 321.7 L424.5 320.7 L425.5 320.9 L426.5 321.9 L427.5 322.7 L428.5 320.6 L429.5 321.5 L430.5 323.0 L431.5 323.1 L432.5 322.0 L433.5 321.3 L434.5 321.2 L435.5 320.4 L436.5 320.8 L437.5 321.0 L438.5 321.2 L439.5 322.3 L440.5 321.7 L441.5 320.4 L442.5 321.9 L443.5 320.8 L444.5 320.8 L445.5 321.1 L446.5 321.0 L447.5 320.5 L448.5 320.8 L449.5 323.0 L450.5 321.7 L451.5 321.5 L452.5 322.4 L453.5 322.5 L454.5 322.6 L455.5 322.7 L456.5 320.5 L457.5 320.3 L458.5 321.1 L459.5 321.7 L460.5 322.6 L461.5 322.4 L462.5 321.7 L463.5 321.6 L464.5 321.4 L465.5 321.6 L466.5 322.1 L467.5 321.5 L468.5 321.5 L468.5 815.8 L469.5 815.1 L470.5 814.8 L471.5 816.2 L472.5 817.0 L473.5 817.1 L474.5 817.1 L475.5 817.0 L476.5 816.4 L477.5 816.6 L478.5 815.3 L479.5 815.4 L480.5 815.0 L481.5 816.0 L482.5 815.4 L483.5 815.6 L484.5 816.0 L485.5 817.0 L486.5 815.7 L487.5 815.0 L488.5 816.1 L489.5 815.0 L490.5 815.8 L491.5 815.4 L492.5 815.5 L493.5 814.2 L494.5 815.7 L495.5 815.3 L496.5 814.9 L497.5 817.0 L498.5 816.9 L499.5 819.1 L500.5 817.6 L501.5 816.3 L502.5 816.1 L503.5 817.2 L504.5 816.4 L505.5 816.4 L506.5 816.5 L507.5 815.4 L508.5 815.7 L509.5 815.4 L510.5 814.6 L511.5 816.0 L512.5 816.4 L513.5 816.1 L514.5 815.2 L515.5 813.9 L516.5 815.3 L517.5 815.5 L518.5 814.3 L519.5 815.1 L520.5 814.3 L521.5 815.1 L522.5 815.6 L523.5 816.0 L524.5 816.1 L525.5 816.1 L526.5 815.0 L527.5 815.1 L528.5 815.1 L529.5 815.3 L530.5 815.8 L531.5 816.3 L532.5 817.3 L533.5 814.4 L534.5 815.5 L535.5 815.5 L536.5 817.5 L537.5 817.3 L538.5 815.2 L539.5 815.8 L540.5 815.4 L541.5 816.4 L542.5 815.2 L543.5 815.5 L544.5 815.5 L545.5 815.6 L546.5 815.2 L547.5 814.1 L548.5 815.4 L549.5 816.4 L550.5 816.0 L551.5 815.1 L552.5 815.6 L553.5 816.2 L554.5 815.8 L555.5 815.8 L556.5 816.9 L557.5 815.4 L558.5 815.2 L559.5 814.0 L560.5 814.4 L561.5 814.6 L562.5 814.5 L563.5 814.7 L564.3 815.8 L564.3 321.5 L565.3 322.4 L566.3 321.8 L567.3 321.5 L568.3 323.3 L569.3 322.2 L570.3 320.4 L571.3 321.3 L572.3 320.7 L573.3 322.4 L574.3 320.9 L575.3 320.8 L576.3 319.9 L577.3 320.9 L578.3 320.4 L579.3 321.0 L580.3 321.0 L581.3 320.8 L582.3 321.9 L583.3 322.4 L584.3 322.0 L585.3 321.0 L586.3 320.4 L587.3 321.2 L588.3 323.3 L589.3 321.9 L590.3 321.1 L591.3 320.7 L592.3 320.3 L593.3 320.2 L594.3 320.7 L595.3 322.3 L596.3 321.9 L597.3 321.3 L598.3 320.1 L599.3 321.0 L600.3 321.3 L601.3 320.4 L602.3 320.1 L603.3 320.9 L604.3 322.0 L605.3 322.2 L606.3 322.0 L607.3 321.5 L608.3 321.7 L609.3 321.6 L610.3 323.3 L611.3 321.4 L612.3 321.2 L613.3 322.4 L614.3 321.7 L615.3 322.7 L616.3 322.0 L617.3 321.8 L618.3 321.4 L619.3 320.3 L620.3 320.2 L621.3 322.7 L622.3 322.5 L623.3 322.5 L624.0 321.2 L626.0 318.5 L627.3 324.5 L628.3 317.0 L629.5 319.0 L630.3 314.0 L631.0 315.0 L632.2 302.5 L633.3 303.0 L634.0 320.5 L635.0 321.5 L635.3 321.0 L636.3 320.4 L637.3 320.8 L638.3 322.4 L639.3 321.9 L640.3 321.8 L641.3 321.6 L642.3 321.8 L643.3 322.4 L644.3 323.0 L645.3 320.9 L646.3 322.3 L647.3 321.9 L648.3 321.4 L649.3 323.4 L650.3 322.2 L651.3 323.4 L652.3 323.1 L653.3 321.4 L654.3 321.8 L655.3 322.2 L656.3 321.7 L657.3 319.7 L658.3 320.4 L659.3 320.9 L660.3 320.3 L661.3 322.4 L661.5 321.5 L661.5 815.8 L662.5 816.0 L663.5 815.6 L664.5 815.5 L665.5 815.0 L666.5 814.8 L667.5 815.4 L668.5 815.9 L669.5 815.4 L670.5 815.6 L671.5 814.6 L672.5 815.7 L673.5 815.1 L674.5 815.7 L675.5 815.0 L676.5 815.0 L677.5 815.6 L678.5 814.8 L679.5 817.3 L680.5 816.4 L681.5 816.0 L682.5 815.3 L683.5 816.9 L684.5 817.4 L685.5 816.8 L686.5 815.1 L687.5 815.1 L688.5 816.0 L689.5 815.5 L690.5 814.7 L691.5 814.4 L692.5 814.5 L693.5 815.2 L694.5 815.0 L695.5 815.5 L696.5 817.9 L697.5 818.2 L698.5 816.0 L699.5 816.2 L700.5 816.0 L701.5 815.8 L702.5 816.6 L703.5 815.9 L704.5 815.6 L705.5 815.4 L706.5 815.5 L707.5 816.7 L708.5 816.8 L709.5 815.2 L710.5 815.2 L711.5 814.9 L712.0 816.0 L714.0 813.5 L716.0 811.5 L717.0 815.0 L718.0 812.5 L720.0 816.0 L720.5 815.0 L721.5 815.5 L722.5 815.1 L723.5 814.9 L724.5 815.7 L725.5 816.0 L726.5 815.2 L727.5 814.2 L728.5 813.1 L729.5 814.1 L730.5 815.9 L731.5 815.8 L732.5 814.0 L733.5 814.3 L734.5 815.5 L735.5 817.0 L736.5 817.3 L737.5 816.8 L738.5 816.4 L739.5 815.2 L740.5 815.2 L741.5 815.3 L742.5 814.9 L743.5 815.5 L744.5 815.3 L745.5 815.9 L746.5 817.0 L747.5 816.9 L748.5 816.6 L749.5 816.0 L750.5 814.7 L751.5 815.2 L752.5 816.0 L753.5 815.1 L754.5 816.5 L755.5 815.8 L756.5 816.1 L757.5 815.7 L758.5 815.8 L758.5 321.5 L759.5 320.4 L760.5 322.7 L761.5 321.1 L762.5 322.1 L763.5 321.3 L764.5 321.6 L765.5 320.9 L766.5 320.9 L767.5 322.0 L768.5 323.3 L769.5 321.6 L770.5 321.6 L771.5 322.3 L772.5 321.3 L773.5 322.0 L774.5 321.1 L775.5 321.8 L776.5 322.0 L777.5 322.7 L778.5 322.3 L779.5 320.9 L780.5 321.8 L781.5 320.7 L782.5 321.8 L783.5 322.8 L784.5 322.6 L785.5 321.5 L786.5 322.5 L787.5 322.1 L788.5 320.8 L789.5 320.9 L790.5 322.4 L791.5 321.6 L792.5 321.7 L793.5 321.3 L794.5 320.1 L795.5 320.4 L796.5 321.3 L797.5 321.6 L798.5 321.4 L799.5 319.7 L800.5 321.7 L801.5 322.2 L802.5 322.6 L803.5 323.0 L804.5 321.8 L805.5 321.2 L806.5 321.6 L807.5 322.9 L808.5 320.8 L809.5 321.0 L810.5 320.7 L811.5 321.6 L812.5 322.7 L813.5 321.8 L814.5 320.6 L815.5 321.2 L816.5 321.1 L817.5 320.1 L818.5 321.6 L819.5 321.1 L820.5 321.9 L821.5 320.6 L822.5 322.0 L823.5 320.6 L824.5 321.9 L825.5 320.2 L826.5 322.0 L827.5 321.4 L828.5 320.2 L829.5 320.7 L830.5 321.4 L831.5 320.7 L832.5 320.7 L833.5 321.4 L834.5 321.3 L835.5 319.0 L836.5 320.0 L837.5 321.2 L838.5 321.6 L839.5 322.3 L840.5 321.3 L841.5 323.5 L842.5 323.0 L843.5 322.4 L844.5 322.8 L845.5 322.8 L846.5 322.2 L847.5 321.3 L848.5 322.2 L849.5 322.2 L850.5 320.3 L851.5 320.1 L852.5 321.2 L853.5 321.5 L854.5 321.5 L854.5 815.8 L855.5 816.0 L856.5 816.4 L857.5 816.2 L858.5 817.2 L859.5 816.0 L860.5 815.6 L861.5 816.0 L862.5 816.5 L863.5 816.7 L864.5 817.4 L865.5 816.1 L866.5 816.9 L867.5 816.7 L868.5 815.4 L869.5 815.5 L870.5 817.3 L871.5 817.1 L872.5 816.0 L873.5 814.0 L874.5 814.4 L875.5 814.6 L876.5 815.3 L877.5 817.4 L878.5 817.1 L879.5 816.6 L880.5 815.4 L881.5 814.7 L882.5 815.1 L883.5 815.1 L884.5 817.9 L885.5 816.4 L886.5 815.6 L887.5 816.6 L888.5 816.2 L889.5 815.0 L890.5 816.5 L891.5 815.9 L892.5 814.8 L893.5 815.6 L894.5 816.1 L895.5 815.7 L896.5 816.3 L897.5 816.7 L898.5 815.5 L899.5 814.0 L900.5 813.1 L901.5 814.5 L902.5 816.2 L903.5 816.8 L904.5 817.4 L905.5 818.0 L906.5 816.8 L907.5 817.1 L908.5 815.2 L909.5 816.1 L910.5 816.2 L911.5 815.9 L912.5 815.5 L913.5 814.8 L914.5 815.4 L915.5 816.7 L916.5 815.9 L917.5 816.3 L918.5 815.5 L919.5 815.9 L920.5 815.0 L921.5 815.8 L922.5 815.6 L923.5 816.0 L924.5 815.4 L925.5 814.7 L926.5 815.0 L927.5 816.3 L928.5 817.3 L929.5 816.2 L930.5 816.6 L931.5 816.8 L932.5 816.6 L933.5 814.9 L934.5 815.7 L935.5 815.0 L936.5 816.4 L937.5 816.7 L938.5 816.7 L939.5 814.2 L940.5 815.6 L941.5 816.3 L942.5 815.0 L943.5 816.2 L944.5 816.0 L945.5 815.8 L946.5 815.2 L947.5 814.7 L948.5 815.0 L949.5 817.9 L950.5 816.9 L951.5 815.8 L951.5 321.5 L952.5 322.2 L953.5 321.3 L954.5 320.9 L955.5 320.8 L956.5 320.5 L957.5 321.7 L958.5 321.4 L959.5 322.1 L960.5 320.9 L961.5 322.0 L962.5 321.7 L963.5 322.1 L964.5 321.7 L965.5 320.9 L966.5 322.2 L967.5 321.5 L968.5 321.4 L969.5 320.7 L970.5 321.3 L971.5 321.1 L972.5 321.5 L973.5 321.8 L974.5 321.1 L975.5 320.2 L976.5 321.3 L977.5 322.1 L978.5 322.3 L979.5 321.0 L980.5 321.7 L981.5 321.9 L982.5 321.9 L983.5 322.0 L984.5 321.5 L985.5 321.7 L986.5 322.3 L987.5 321.5 L988.5 320.3 L989.5 320.9 L990.5 321.4 L991.5 320.0 L992.5 320.3 L993.5 321.4 L994.5 321.3 L995.5 321.5 L996.5 320.5 L997.5 321.8 L998.5 323.0 L999.5 322.0 L1000.5 321.2 L1001.5 320.4 L1002.5 321.7 L1003.5 321.7 L1004.5 320.9 L1005.5 322.2 L1006.5 322.4 L1007.5 322.4 L1008.5 320.5 L1009.5 321.0 L1010.5 321.8 L1011.5 320.6 L1012.5 321.9 L1013.5 322.8 L1014.5 322.9 L1015.5 321.6 L1016.5 321.0 L1017.5 322.0 L1018.5 322.5 L1019.5 322.9 L1020.5 323.1 L1021.5 322.1 L1022.5 321.5 L1023.5 320.0 L1024.5 321.5 L1025.5 323.3 L1026.5 321.9 L1027.5 321.3 L1028.5 321.9 L1029.5 322.0 L1030.5 320.6 L1031.5 320.5 L1032.5 320.2 L1033.5 322.5 L1034.5 321.4 L1035.5 322.1 L1036.5 323.3 L1037.5 323.8 L1038.5 323.7 L1039.5 323.8 L1040.5 321.5 L1041.5 321.2 L1042.5 320.8 L1043.5 321.0 L1044.5 323.4 L1045.5 321.0 L1046.5 321.7 L1047.5 320.6 L1048.5 322.2 L1048.5 321.5 L1048.5 515.0" fill="none" stroke="#ffa600" stroke-width="1.7" stroke-linejoin="round"/>
  <line x1="564.5" y1="158" x2="564.5" y2="982" stroke="#009200" stroke-width="1.3"/>
  <path d="M1038.5 487.5 L1047.5 483 V492 Z" fill="none" stroke="#18a81d" stroke-width="1.3"/>
  <path d="M72 562 L81 568 L72 573.5 Z" fill="#3c8fd0" stroke="#fff" stroke-width="1.2"/>
  <path d="M72.5 573.5 L81 568.5" stroke="#ffa500" stroke-width="1.3"/>
</svg>
<div class="t" style="left:32.58px;top:154.21px;font-size:9px;color:#999;">2500 mV</div>
<div class="t" style="left:32.58px;top:235.21px;font-size:9px;color:#999;">2000 mV</div>
<div class="t" style="left:32.58px;top:318.21px;font-size:9px;color:#999;">1500 mV</div>
<div class="t" style="left:32.58px;top:400.21px;font-size:9px;color:#999;">1000 mV</div>
<div class="t" style="left:37.58px;top:483.21px;font-size:9px;color:#999;">500 mV</div>
<div class="t" style="left:47.59px;top:565.21px;font-size:9px;color:#999;">0 mV</div>
<div class="t" style="left:34.59px;top:647.21px;font-size:9px;color:#999;">-500 mV</div>
<div class="t" style="left:29.58px;top:730.21px;font-size:9px;color:#999;">-1000 mV</div>
<div class="t" style="left:29.58px;top:812.21px;font-size:9px;color:#999;">-1500 mV</div>
<div class="t" style="left:29.58px;top:895.21px;font-size:9px;color:#999;">-2000 mV</div>
<div class="t" style="left:29.58px;top:978.21px;font-size:9px;color:#999;">-2500 mV</div>
<div class="t" style="left:64.99px;top:995.71px;font-size:9px;color:#999;">-2500 us</div>
<div class="t" style="left:161.99px;top:995.71px;font-size:9px;color:#999;">-2000 us</div>
<div class="t" style="left:257.99px;top:995.71px;font-size:9px;color:#999;">-1500 us</div>
<div class="t" style="left:354.99px;top:995.71px;font-size:9px;color:#999;">-1000 us</div>
<div class="t" style="left:449.74px;top:995.71px;font-size:9px;color:#999;">-500.0 us</div>
<div class="t" style="left:559.50px;top:995.71px;font-size:9px;color:#999;">0 s</div>
<div class="t" style="left:645.24px;top:995.71px;font-size:9px;color:#999;">500.0 us</div>
<div class="t" style="left:742.49px;top:995.71px;font-size:9px;color:#999;">1000 us</div>
<div class="t" style="left:839.49px;top:995.71px;font-size:9px;color:#999;">1500 us</div>
<div class="t" style="left:935.49px;top:995.71px;font-size:9px;color:#999;">2000 us</div>
<div class="t" style="left:1032.49px;top:995.71px;font-size:9px;color:#999;">2500 us</div>
<div class="t" style="left:13px;top:583px;font-size:12.5px;color:#6a6a6a;transform:rotate(-90deg);transform-origin:0 0">Ch 2</div>
<div class="sb" style="top:158px"></div>
<div class="sb" style="top:181.5px"></div>
<div class="sb" style="top:205px"></div>
<div class="sb" style="top:228.5px"></div>
<div class="sb" style="top:252px"></div>
<div class="sb" style="top:275.5px"></div>
<div class="sb" style="top:299px"></div>
<div class="t" style="left:1054.00px;top:163.47px;font-size:8.5px;color:#eee;font-weight:bold;transform:scaleX(0.8346);transform-origin:0 0;">FFT</div>
<svg width="19" height="19" style="left:1051px;top:181.5px"><path d="M5 5.5 C10.5 5.5 8.5 13.7 14 13.7" fill="none" stroke="#ddd" stroke-width="1.2"/></svg>
<svg width="19" height="19" style="left:1051px;top:205px"><path d="M5.5 7.5 V5.5 H7.5 M11.5 5.5 H13.5 V7.5 M13.5 11.5 V13.5 H11.5 M7.5 13.5 H5.5 V11.5" fill="none" stroke="#ddd" stroke-width="1.3"/></svg>
<svg width="19" height="19" style="left:1051px;top:228.5px"><path d="M9.5 4 V15" stroke="#eee" stroke-width="1.3"/><path d="M3 9.5 H7" stroke="#eee" stroke-width="1.2"/><path d="M5.5 7.5 L8 9.5 L5.5 11.5 Z M13.5 7.5 L11 9.5 L13.5 11.5 Z" fill="#eee"/><path d="M16 9.5 H12" stroke="#eee" stroke-width="1.2"/></svg>
<svg width="19" height="19" style="left:1051px;top:252px"><path d="M8 4 H11 V8 H13.5 L9.5 12 L5.5 8 H8 Z" fill="#eee"/><rect x="5" y="13.5" width="9" height="1.5" fill="#eee"/></svg>
<div class="t" style="left:1053.80px;top:281.47px;font-size:8.5px;color:#eee;font-weight:bold;transform:scaleX(0.9457);transform-origin:0 0;">PIN</div>
<svg width="19" height="19" style="left:1051px;top:299px"><path d="M5.2 10.5 A4.6 4.6 0 1 0 6.8 6" fill="none" stroke="#eee" stroke-width="1.3"/><path d="M4 5.5 L7.5 5 L7 8.5 Z" fill="#eee"/><circle cx="9.8" cy="9.8" r="1.2" fill="#eee"/></svg>
<div class="a" style="left:1071px;top:1014px;width:1px;height:24px;background:#000"></div>
<div class="a" style="left:1072px;top:145px;width:1px;height:893px;background:#5e5e5e"></div>
<div class="a" style="left:8px;top:1015px;width:73px;height:22px;background:#555;border:1px solid #222;border-radius:2px"></div>
<div class="t" style="left:24.80px;top:1022.31px;font-size:9px;color:#dcdcdc;transform:scaleX(0.9344);transform-origin:0 0;">MATH</div>
<div class="t" style="left:54.80px;top:1019.99px;font-size:12.5px;color:#dcdcdc;font-weight:bold;">Σ</div>
<div class="a" style="left:83px;top:1015px;width:22px;height:22px;background:#555;border:1px solid #222;border-radius:2px"></div>
<svg width="12" height="12" style="left:88.5px;top:1020.5px"><path d="M9.6 3.8 A4.2 4.2 0 1 0 10.1 7.2" fill="none" stroke="#ddd" stroke-width="1.3"/><path d="M6.8 3.6 H10.8 V-.4 Z" fill="#ddd"/></svg>
<div class="a" style="left:541px;top:1015px;width:73px;height:22px;background:#555;border:1px solid #222;border-radius:2px"></div>
<div class="t" style="left:550.50px;top:1022.71px;font-size:9px;color:#d8d8d8;transform:scaleX(0.8110);transform-origin:0 0;">CURSORS</div>
<svg width="12" height="12" style="left:592px;top:1020px"><path d="M1 10 L8.5 2.5 L10 4 L2.5 11.5 L1 11.5 Z" fill="#ddd"/><path d="M9.3 1.7 L10.2 .8 L11.7 2.3 L10.8 3.2 Z" fill="#ddd"/></svg>
<div class="a" style="left:1099px;top:100px;width:73px;height:22px;background:#ececec;border:1px solid #222;border-radius:2px"></div>
<div class="t" style="left:1108.60px;top:107.09px;font-size:10px;color:#333;transform:scaleX(0.8942);transform-origin:0 0;">SINGLE</div>
<svg width="10" height="10" style="left:1150.5px;top:107.5px"><path d="M0 0 L6.5 4 L0 8 Z" fill="#333"/><rect x="6.5" y="0" width="1.6" height="8" fill="#333"/></svg>
<div class="a" style="left:1177px;top:100px;width:74px;height:22px;background:#ececec;border:1px solid #222;border-radius:2px"></div>
<div class="t" style="left:1193.00px;top:107.09px;font-size:10px;color:#333;transform:scaleX(0.9231);transform-origin:0 0;">RUN</div>
<svg width="10" height="10" style="left:1223px;top:107.5px"><path d="M0 0 L7.8 4 L0 8 Z" fill="#333"/></svg>
<div class="t" style="left:1166.00px;top:125.95px;font-size:12px;color:#c8c8c8;transform:scaleX(0.9303);transform-origin:0 0;">Idle</div>
<div class="t" style="left:1084.80px;top:155.95px;font-size:12px;color:#d4d4d4;transform:scaleX(0.9812);transform-origin:0 0;">Time/</div>
<div class="btn" style="left:1151px;top:151px;"></div>
<svg width="22" height="21" style="left:1151px;top:151px"><circle cx="9.5" cy="9" r="5.3" fill="none" stroke="#ddd" stroke-width="1.2"/><path d="M13.3 12.8 L17.5 17" stroke="#ddd" stroke-width="1.4"/><path d="M6.8 9 H12.2" stroke="#ddd" stroke-width="1.2"/></svg>
<div class="inp lt" style="top:151px"></div>
<div class="t" style="left:1181.20px;top:155.95px;font-size:12px;color:#222;transform:scaleX(0.9317);transform-origin:0 0;">500.0 us/</div>
<div class="btn" style="left:1246px;top:151px;"></div>
<svg width="22" height="21" style="left:1246px;top:151px"><circle cx="9.5" cy="9" r="5.3" fill="none" stroke="#ddd" stroke-width="1.2"/><path d="M13.3 12.8 L17.5 17" stroke="#ddd" stroke-width="1.4"/><path d="M6.8 9 H12.2 M9.5 6.3 V11.7" stroke="#ddd" stroke-width="1.2"/></svg>
<div class="sep" style="top:177px"></div>
<div class="tri" style="top:190px"></div>
<div class="t" style="left:1153.80px;top:187.29px;font-size:12.5px;color:#fff;font-weight:bold;transform:scaleX(0.8827);transform-origin:0 0;">Trigger</div>
<div class="a" style="left:1098px;top:211px;width:68px;height:23px;background:#222"></div>
<div class="a" style="left:1099px;top:212px;width:21px;height:21px;background:#3e87c5"></div>
<div class="a" style="left:1121.5px;top:212px;width:21.5px;height:21px;background:#555;box-shadow:inset 0 0 0 1px #5e5e5e"></div>
<div class="a" style="left:1144px;top:212px;width:21px;height:21px;background:#555;box-shadow:inset 0 0 0 1px #5e5e5e"></div>
<svg width="21" height="21" style="left:1099px;top:212px"><path d="M5.1 16.6 H11 V4.4 H16.5" fill="none" stroke="#eee" stroke-width="1.2"/><path d="M8.3 12.5 L11 9.3 L13.7 12.5 Z" fill="#eee"/></svg>
<svg width="21" height="21" style="left:1121px;top:212px"><path d="M5.9 4.2 H12.4 V16.5 H17.4" fill="none" stroke="#ddd" stroke-width="1.2"/><path d="M9.7 9.3 L12.4 12.5 L15.1 9.3 Z" fill="#ddd"/></svg>
<div class="t" style="left:1147.00px;top:218.47px;font-size:8.5px;color:#ddd;transform:scaleX(0.9238);transform-origin:0 0;">OFF</div>
<div class="a" style="left:1190px;top:213px;width:73px;height:21px;background:#555;border:1px solid #222"></div>
<div class="t" style="left:1214.00px;top:219.87px;font-size:8.5px;color:#d8d8d8;transform:scaleX(0.8303);transform-origin:0 0;">FORCE</div>
<div class="t" style="left:1084.80px;top:244.25px;font-size:12px;color:#d4d4d4;transform:scaleX(0.9258);transform-origin:0 0;">Source</div>
<div class="inpw" style="top:239px"></div>
<div class="t" style="left:1176.30px;top:244.45px;font-size:12px;color:#e4e4e4;transform:scaleX(0.9097);transform-origin:0 0;">Osc Ch 1</div>
<svg width="8" height="8" style="left:1256px;top:248px"><path d="M0 0 H7 L3.5 6 Z" fill="#ddd"/></svg>
<div class="t" style="left:1084.80px;top:269.95px;font-size:12px;color:#d4d4d4;transform:scaleX(0.9028);transform-origin:0 0;">Level</div>
<div class="inpw" style="top:265px"></div>
<div class="t" style="left:1176.60px;top:269.95px;font-size:12px;color:#e4e4e4;transform:scaleX(0.9345);transform-origin:0 0;">500.0 mV</div>
<div class="sep" style="top:290px"></div>
<div class="tri" style="top:302.5px"></div>
<div class="t" style="left:1150.00px;top:299.79px;font-size:12.5px;color:#fff;font-weight:bold;transform:scaleX(0.8305);transform-origin:0 0;">Osc Ch 1</div>
<div class="pwr" style="top:296px;background:#ffa000"></div>
<svg width="22" height="20" style="left:1246px;top:296px"><path d="M7.3 6.2 A4.7 4.7 0 1 0 14.9 6.2" fill="none" stroke="#fff" stroke-width="1.2"/><path d="M11.1 4.2 V9.3" stroke="#fff" stroke-width="1.3"/></svg>
<div class="t" style="left:1084.80px;top:327.95px;font-size:12px;color:#d4d4d4;transform:scaleX(1.0188);transform-origin:0 0;">Volts/</div>
<div class="btn" style="left:1151px;top:323px;"></div>
<svg width="22" height="21" style="left:1151px;top:323px"><circle cx="9.5" cy="9" r="5.3" fill="none" stroke="#ddd" stroke-width="1.2"/><path d="M13.3 12.8 L17.5 17" stroke="#ddd" stroke-width="1.4"/><path d="M6.8 9 H12.2" stroke="#ddd" stroke-width="1.2"/></svg>
<div class="inp lt" style="top:323px"></div>
<div class="t" style="left:1181.20px;top:327.95px;font-size:12px;color:#222;transform:scaleX(0.9598);transform-origin:0 0;">500.0 mV/</div>
<div class="btn" style="left:1246px;top:323px;"></div>
<svg width="22" height="21" style="left:1246px;top:323px"><circle cx="9.5" cy="9" r="5.3" fill="none" stroke="#ddd" stroke-width="1.2"/><path d="M13.3 12.8 L17.5 17" stroke="#ddd" stroke-width="1.4"/><path d="M6.8 9 H12.2 M9.5 6.3 V11.7" stroke="#ddd" stroke-width="1.2"/></svg>
<div class="t" style="left:1084.80px;top:352.95px;font-size:12px;color:#d4d4d4;transform:scaleX(0.9688);transform-origin:0 0;">Offset</div>
<div class="btn" style="left:1151px;top:348px;"></div>
<svg width="22" height="21" style="left:1151px;top:348px"><path d="M6.5 10.5 H15.5" stroke="#ddd" stroke-width="1.3"/></svg>
<div class="inp dk" style="top:348px"></div>
<div class="t" style="left:1180.70px;top:352.95px;font-size:12px;color:#eee;transform:scaleX(0.9138);transform-origin:0 0;">0.000 V</div>
<div class="btn" style="left:1246px;top:348px;"></div>
<svg width="22" height="21" style="left:1246px;top:348px"><path d="M6.5 10.5 H15.5 M11 6 V15" stroke="#ddd" stroke-width="1.3"/></svg>
<div class="t" style="left:1084.80px;top:377.95px;font-size:12px;color:#d4d4d4;transform:scaleX(0.9496);transform-origin:0 0;">Samples/</div>
<div class="inp dis" style="top:373px"></div>
<div class="t" style="left:1180.70px;top:377.95px;font-size:12px;color:#8a8a8a;transform:scaleX(0.9259);transform-origin:0 0;">229.4 kS/s</div>
<div class="btn" style="left:1246px;top:373px;"></div>
<svg width="22" height="21" style="left:1246px;top:373px"><path d="M8.9 8.6 V7.3 A2.4 2.4 0 0 1 13.7 7.3 V8.6" fill="none" stroke="#d8d8d8" stroke-width="1.2"/><rect x="7.4" y="8.6" width="8" height="6.8" rx="1" fill="none" stroke="#d8d8d8" stroke-width="1.2"/><circle cx="11.3" cy="12" r=".9" fill="#eee"/></svg>
<div class="t" style="left:1084.80px;top:403.65px;font-size:12px;color:#d4d4d4;transform:scaleX(0.9210);transform-origin:0 0;">Samples</div>
<div class="inp dis" style="top:398.7px"></div>
<div class="t" style="left:1180.70px;top:403.65px;font-size:12px;color:#8a8a8a;transform:scaleX(0.9015);transform-origin:0 0;">2.294 kS</div>
<div class="btn" style="left:1246px;top:398.7px;"></div>
<svg width="22" height="21" style="left:1246px;top:398.7px"><path d="M8.9 8.6 V7.3 A2.4 2.4 0 0 1 13.7 7.3 V8.6" fill="none" stroke="#d8d8d8" stroke-width="1.2"/><rect x="7.4" y="8.6" width="8" height="6.8" rx="1" fill="none" stroke="#d8d8d8" stroke-width="1.2"/><circle cx="11.3" cy="12" r=".9" fill="#eee"/></svg>
<div class="sep" style="top:424px"></div>
<div class="tri" style="top:436.5px"></div>
<div class="t" style="left:1149.50px;top:433.79px;font-size:12.5px;color:#fff;font-weight:bold;transform:scaleX(0.8489);transform-origin:0 0;">Osc Ch 2</div>
<div class="pwr" style="top:430px;background:#3e87c5"></div>
<svg width="22" height="20" style="left:1246px;top:430px"><path d="M7.3 6.2 A4.7 4.7 0 1 0 14.9 6.2" fill="none" stroke="#fff" stroke-width="1.2"/><path d="M11.1 4.2 V9.3" stroke="#fff" stroke-width="1.3"/></svg>
<div class="t" style="left:1084.80px;top:461.95px;font-size:12px;color:#d4d4d4;transform:scaleX(1.0188);transform-origin:0 0;">Volts/</div>
<div class="btn" style="left:1151px;top:457px;"></div>
<svg width="22" height="21" style="left:1151px;top:457px"><circle cx="9.5" cy="9" r="5.3" fill="none" stroke="#ddd" stroke-width="1.2"/><path d="M13.3 12.8 L17.5 17" stroke="#ddd" stroke-width="1.4"/><path d="M6.8 9 H12.2" stroke="#ddd" stroke-width="1.2"/></svg>
<div class="inp lt" style="top:457px"></div>
<div class="t" style="left:1181.20px;top:461.95px;font-size:12px;color:#222;transform:scaleX(0.9598);transform-origin:0 0;">500.0 mV/</div>
<div class="btn" style="left:1246px;top:457px;"></div>
<svg width="22" height="21" style="left:1246px;top:457px"><circle cx="9.5" cy="9" r="5.3" fill="none" stroke="#ddd" stroke-width="1.2"/><path d="M13.3 12.8 L17.5 17" stroke="#ddd" stroke-width="1.4"/><path d="M6.8 9 H12.2 M9.5 6.3 V11.7" stroke="#ddd" stroke-width="1.2"/></svg>
<div class="t" style="left:1084.80px;top:486.95px;font-size:12px;color:#d4d4d4;transform:scaleX(0.9688);transform-origin:0 0;">Offset</div>
<div class="btn" style="left:1151px;top:482px;"></div>
<svg width="22" height="21" style="left:1151px;top:482px"><path d="M6.5 10.5 H15.5" stroke="#ddd" stroke-width="1.3"/></svg>
<div class="inp dk" style="top:482px"></div>
<div class="t" style="left:1180.70px;top:486.95px;font-size:12px;color:#eee;transform:scaleX(0.9138);transform-origin:0 0;">0.000 V</div>
<div class="btn" style="left:1246px;top:482px;"></div>
<svg width="22" height="21" style="left:1246px;top:482px"><path d="M6.5 10.5 H15.5 M11 6 V15" stroke="#ddd" stroke-width="1.3"/></svg>
<div class="t" style="left:1084.80px;top:511.95px;font-size:12px;color:#d4d4d4;transform:scaleX(0.9496);transform-origin:0 0;">Samples/</div>
<div class="inp dis" style="top:507px"></div>
<div class="t" style="left:1180.70px;top:511.95px;font-size:12px;color:#8a8a8a;transform:scaleX(0.9259);transform-origin:0 0;">229.4 kS/s</div>
<div class="btn" style="left:1246px;top:507px;"></div>
<svg width="22" height="21" style="left:1246px;top:507px"><path d="M8.9 8.6 V7.3 A2.4 2.4 0 0 1 13.7 7.3 V8.6" fill="none" stroke="#d8d8d8" stroke-width="1.2"/><rect x="7.4" y="8.6" width="8" height="6.8" rx="1" fill="none" stroke="#d8d8d8" stroke-width="1.2"/><circle cx="11.3" cy="12" r=".9" fill="#eee"/></svg>
<div class="t" style="left:1084.80px;top:537.65px;font-size:12px;color:#d4d4d4;transform:scaleX(0.9210);transform-origin:0 0;">Samples</div>
<div class="inp dis" style="top:532.7px"></div>
<div class="t" style="left:1180.70px;top:537.65px;font-size:12px;color:#8a8a8a;transform:scaleX(0.9015);transform-origin:0 0;">2.294 kS</div>
<div class="btn" style="left:1246px;top:532.7px;"></div>
<svg width="22" height="21" style="left:1246px;top:532.7px"><path d="M8.9 8.6 V7.3 A2.4 2.4 0 0 1 13.7 7.3 V8.6" fill="none" stroke="#d8d8d8" stroke-width="1.2"/><rect x="7.4" y="8.6" width="8" height="6.8" rx="1" fill="none" stroke="#d8d8d8" stroke-width="1.2"/><circle cx="11.3" cy="12" r=".9" fill="#eee"/></svg>
<div class="sep" style="top:558px"></div>
<div class="tri" style="top:570px"></div>
<div class="t" style="left:1148.10px;top:566.29px;font-size:12.5px;color:#fff;font-weight:bold;transform:scaleX(0.8968);transform-origin:0 0;">Wavegen</div>
<div class="pwr" style="top:563px;background:#3e87c5"></div>
<svg width="22" height="20" style="left:1246px;top:563px"><path d="M7.3 6.2 A4.7 4.7 0 1 0 14.9 6.2" fill="none" stroke="#fff" stroke-width="1.2"/><path d="M11.1 4.2 V9.3" stroke="#fff" stroke-width="1.3"/></svg>
<div class="a" style="left:1099px;top:589px;width:147px;height:21px;background:#333"></div>
<div class="a" style="left:1100px;top:590px;width:28px;height:19px;background:#555"></div>
<div class="a" style="left:1129px;top:590px;width:29px;height:19px;background:#555"></div>
<div class="a" style="left:1159px;top:590px;width:28px;height:19px;background:#555"></div>
<div class="a" style="left:1188px;top:590px;width:29px;height:19px;background:#4b6d8c"></div>
<div class="a" style="left:1218px;top:590px;width:27px;height:19px;background:#555"></div>
<svg width="150" height="21" style="left:1099px;top:589px"><g fill="none" stroke="#8a8a8a" stroke-width="1.1">
<path d="M7.5 10.6 C9 5 10.5 4.5 11.7 4.5 C14 4.5 16 16.6 18.4 16.6 C20 16.6 21.5 15 23.2 10.5"/>
<path d="M37.2 9.9 L41.4 5 L48.7 16 L52.9 10.3"/>
<path d="M66.8 16.2 L82 5 V16"/>
<path d="M96.5 16 H101.3 V5 H111.6 V16" stroke="#93a3b0"/>
<path d="M125 10.5 H140"/>
</g></svg>
<div class="t" style="left:1084.80px;top:618.25px;font-size:12px;color:#d4d4d4;transform:scaleX(0.9401);transform-origin:0 0;">Frequency</div>
<div class="btn" style="left:1151px;top:614.3px;border-color:#474747"></div>
<svg width="22" height="21" style="left:1151px;top:614.3px"><path d="M6.5 10.5 H15.5" stroke="#777" stroke-width="1.3"/></svg>
<div class="inp dis" style="top:614.3px"></div>
<div class="t" style="left:1181.00px;top:619.25px;font-size:12px;color:#858585;transform:scaleX(0.9254);transform-origin:0 0;">1.000 kHz</div>
<div class="btn" style="left:1246px;top:614.3px;border-color:#474747"></div>
<svg width="22" height="21" style="left:1246px;top:614.3px"><path d="M6.5 10.5 H15.5 M11 6 V15" stroke="#777" stroke-width="1.3"/></svg>
<div class="t" style="left:1084.80px;top:643.75px;font-size:12px;color:#d4d4d4;transform:scaleX(1.0082);transform-origin:0 0;">Amplitude</div>
<div class="btn" style="left:1151px;top:639.8px;border-color:#474747"></div>
<svg width="22" height="21" style="left:1151px;top:639.8px"><path d="M6.5 10.5 H15.5" stroke="#777" stroke-width="1.3"/></svg>
<div class="inp dis" style="top:639.8px"></div>
<div class="t" style="left:1181.00px;top:644.75px;font-size:12px;color:#858585;transform:scaleX(0.9449);transform-origin:0 0;">3.000 Vpp</div>
<div class="btn" style="left:1246px;top:639.8px;border-color:#474747"></div>
<svg width="22" height="21" style="left:1246px;top:639.8px"><path d="M6.5 10.5 H15.5 M11 6 V15" stroke="#777" stroke-width="1.3"/></svg>
<div class="t" style="left:1084.80px;top:669.15px;font-size:12px;color:#d4d4d4;transform:scaleX(0.9531);transform-origin:0 0;">DC Offset</div>
<div class="btn" style="left:1151px;top:665.2px;border-color:#474747"></div>
<svg width="22" height="21" style="left:1151px;top:665.2px"><path d="M6.5 10.5 H15.5" stroke="#777" stroke-width="1.3"/></svg>
<div class="inp dis" style="top:665.2px"></div>
<div class="t" style="left:1181.00px;top:670.15px;font-size:12px;color:#858585;transform:scaleX(0.9138);transform-origin:0 0;">0.000 V</div>
<div class="btn" style="left:1246px;top:665.2px;border-color:#474747"></div>
<svg width="22" height="21" style="left:1246px;top:665.2px"><path d="M6.5 10.5 H15.5 M11 6 V15" stroke="#777" stroke-width="1.3"/></svg>
<div class="sep" style="top:689px"></div>
<div class="tri" style="top:702.5px"></div>
<div class="t" style="left:1155.15px;top:699.99px;font-size:12.5px;color:#fff;font-weight:bold;transform:scaleX(0.9085);transform-origin:0 0;">Digital</div>
<div class="a" style="left:1099px;top:721px;width:148px;height:22px;background:#222"></div>
<div class="a" style="left:1100px;top:722px;width:73px;height:20px;background:#555"></div>
<div class="a" style="left:1174px;top:722px;width:72px;height:20px;background:#3e87c5"></div>
<div class="t" style="left:1116.20px;top:728.47px;font-size:8.5px;color:#d8d8d8;transform:scaleX(0.9018);transform-origin:0 0;">ANALYZER</div>
<div class="t" style="left:1203.50px;top:728.47px;font-size:8.5px;color:#e0e0e0;transform:scaleX(1.0322);transform-origin:0 0;">I/O</div>
<div class="t" style="left:1088.16px;top:748.15px;font-size:12px;color:#fff;font-weight:bold;">1</div>
<div class="inb" style="left:1081px;top:764px"></div>
<div class="t" style="left:1087.12px;top:769.33px;font-size:10.5px;color:#717d87;">In</div>
<div class="t" style="left:1128.66px;top:748.15px;font-size:12px;color:#fff;font-weight:bold;">2</div>
<div class="inb" style="left:1121.5px;top:764px"></div>
<div class="t" style="left:1127.62px;top:769.33px;font-size:10.5px;color:#717d87;">In</div>
<div class="t" style="left:1169.16px;top:748.15px;font-size:12px;color:#fff;font-weight:bold;">3</div>
<div class="inb" style="left:1162px;top:764px"></div>
<div class="t" style="left:1168.12px;top:769.33px;font-size:10.5px;color:#717d87;">In</div>
<div class="t" style="left:1209.66px;top:748.15px;font-size:12px;color:#fff;font-weight:bold;">4</div>
<div class="inb" style="left:1202.5px;top:764px"></div>
<div class="t" style="left:1208.62px;top:769.33px;font-size:10.5px;color:#717d87;">In</div>
<div class="t" style="left:1250.16px;top:748.15px;font-size:12px;color:#fff;font-weight:bold;">5</div>
<div class="inb" style="left:1243px;top:764px"></div>
<div class="t" style="left:1249.12px;top:769.33px;font-size:10.5px;color:#717d87;">In</div>
<div class="t" style="left:1088.16px;top:789.55px;font-size:12px;color:#fff;font-weight:bold;">6</div>
<div class="inb" style="left:1081px;top:806px"></div>
<div class="t" style="left:1087.12px;top:811.33px;font-size:10.5px;color:#717d87;">In</div>
<div class="t" style="left:1128.66px;top:789.55px;font-size:12px;color:#fff;font-weight:bold;">7</div>
<div class="inb" style="left:1121.5px;top:806px"></div>
<div class="t" style="left:1127.62px;top:811.33px;font-size:10.5px;color:#717d87;">In</div>
<div class="t" style="left:1169.16px;top:789.55px;font-size:12px;color:#fff;font-weight:bold;">8</div>
<div class="inb" style="left:1162px;top:806px"></div>
<div class="t" style="left:1168.12px;top:811.33px;font-size:10.5px;color:#717d87;">In</div>
<div class="t" style="left:1209.66px;top:789.55px;font-size:12px;color:#fff;font-weight:bold;">9</div>
<div class="inb" style="left:1202.5px;top:806px"></div>
<div class="t" style="left:1208.62px;top:811.33px;font-size:10.5px;color:#717d87;">In</div>
<div class="t" style="left:1246.83px;top:789.55px;font-size:12px;color:#fff;font-weight:bold;">10</div>
<div class="inb" style="left:1243px;top:806px"></div>
<div class="t" style="left:1249.12px;top:811.33px;font-size:10.5px;color:#717d87;">In</div>
<div class="a" style="left:1099px;top:831px;width:148px;height:22px;background:#222"></div>
<div class="a" style="left:1100px;top:832px;width:73px;height:20px;background:#555"></div>
<div class="a" style="left:1174px;top:832px;width:72px;height:20px;background:#555"></div>
<svg width="12" height="12" style="left:1130px;top:836px"><path d="M9.6 3.8 A4.2 4.2 0 1 0 10.1 7.2" fill="none" stroke="#ddd" stroke-width="1.3"/><path d="M6.8 3.6 H10.8 V-.4 Z" fill="#ddd"/></svg>
<div class="t" style="left:1188.50px;top:838.37px;font-size:8.5px;color:#d8d8d8;transform:scaleX(0.8920);transform-origin:0 0;">DIRECTION</div>
<div class="sep" style="top:856px"></div>
<div class="tri" style="top:869.5px"></div>
<div class="t" style="left:1126.55px;top:866.49px;font-size:12.5px;color:#fff;font-weight:bold;transform:scaleX(0.8821);transform-origin:0 0;">DC Power Supply</div>
<div class="t" style="left:1084.80px;top:890.95px;font-size:12px;color:#d4d4d4;transform:scaleX(0.9074);transform-origin:0 0;">Ch 1</div>
<div class="inpw" style="top:886px"></div>
<div class="t" style="left:1177.00px;top:890.95px;font-size:12px;color:#e4e4e4;transform:scaleX(0.9267);transform-origin:0 0;">17.00 mV</div>
<div class="t" style="left:1084.80px;top:916.15px;font-size:12px;color:#d4d4d4;transform:scaleX(0.9271);transform-origin:0 0;">Ch 2</div>
<div class="inpw" style="top:911px"></div>
<div class="t" style="left:1177.00px;top:915.95px;font-size:12px;color:#e4e4e4;transform:scaleX(0.9267);transform-origin:0 0;">27.00 mV</div>
<div class="sep" style="top:935.5px"></div>
</body></html>
